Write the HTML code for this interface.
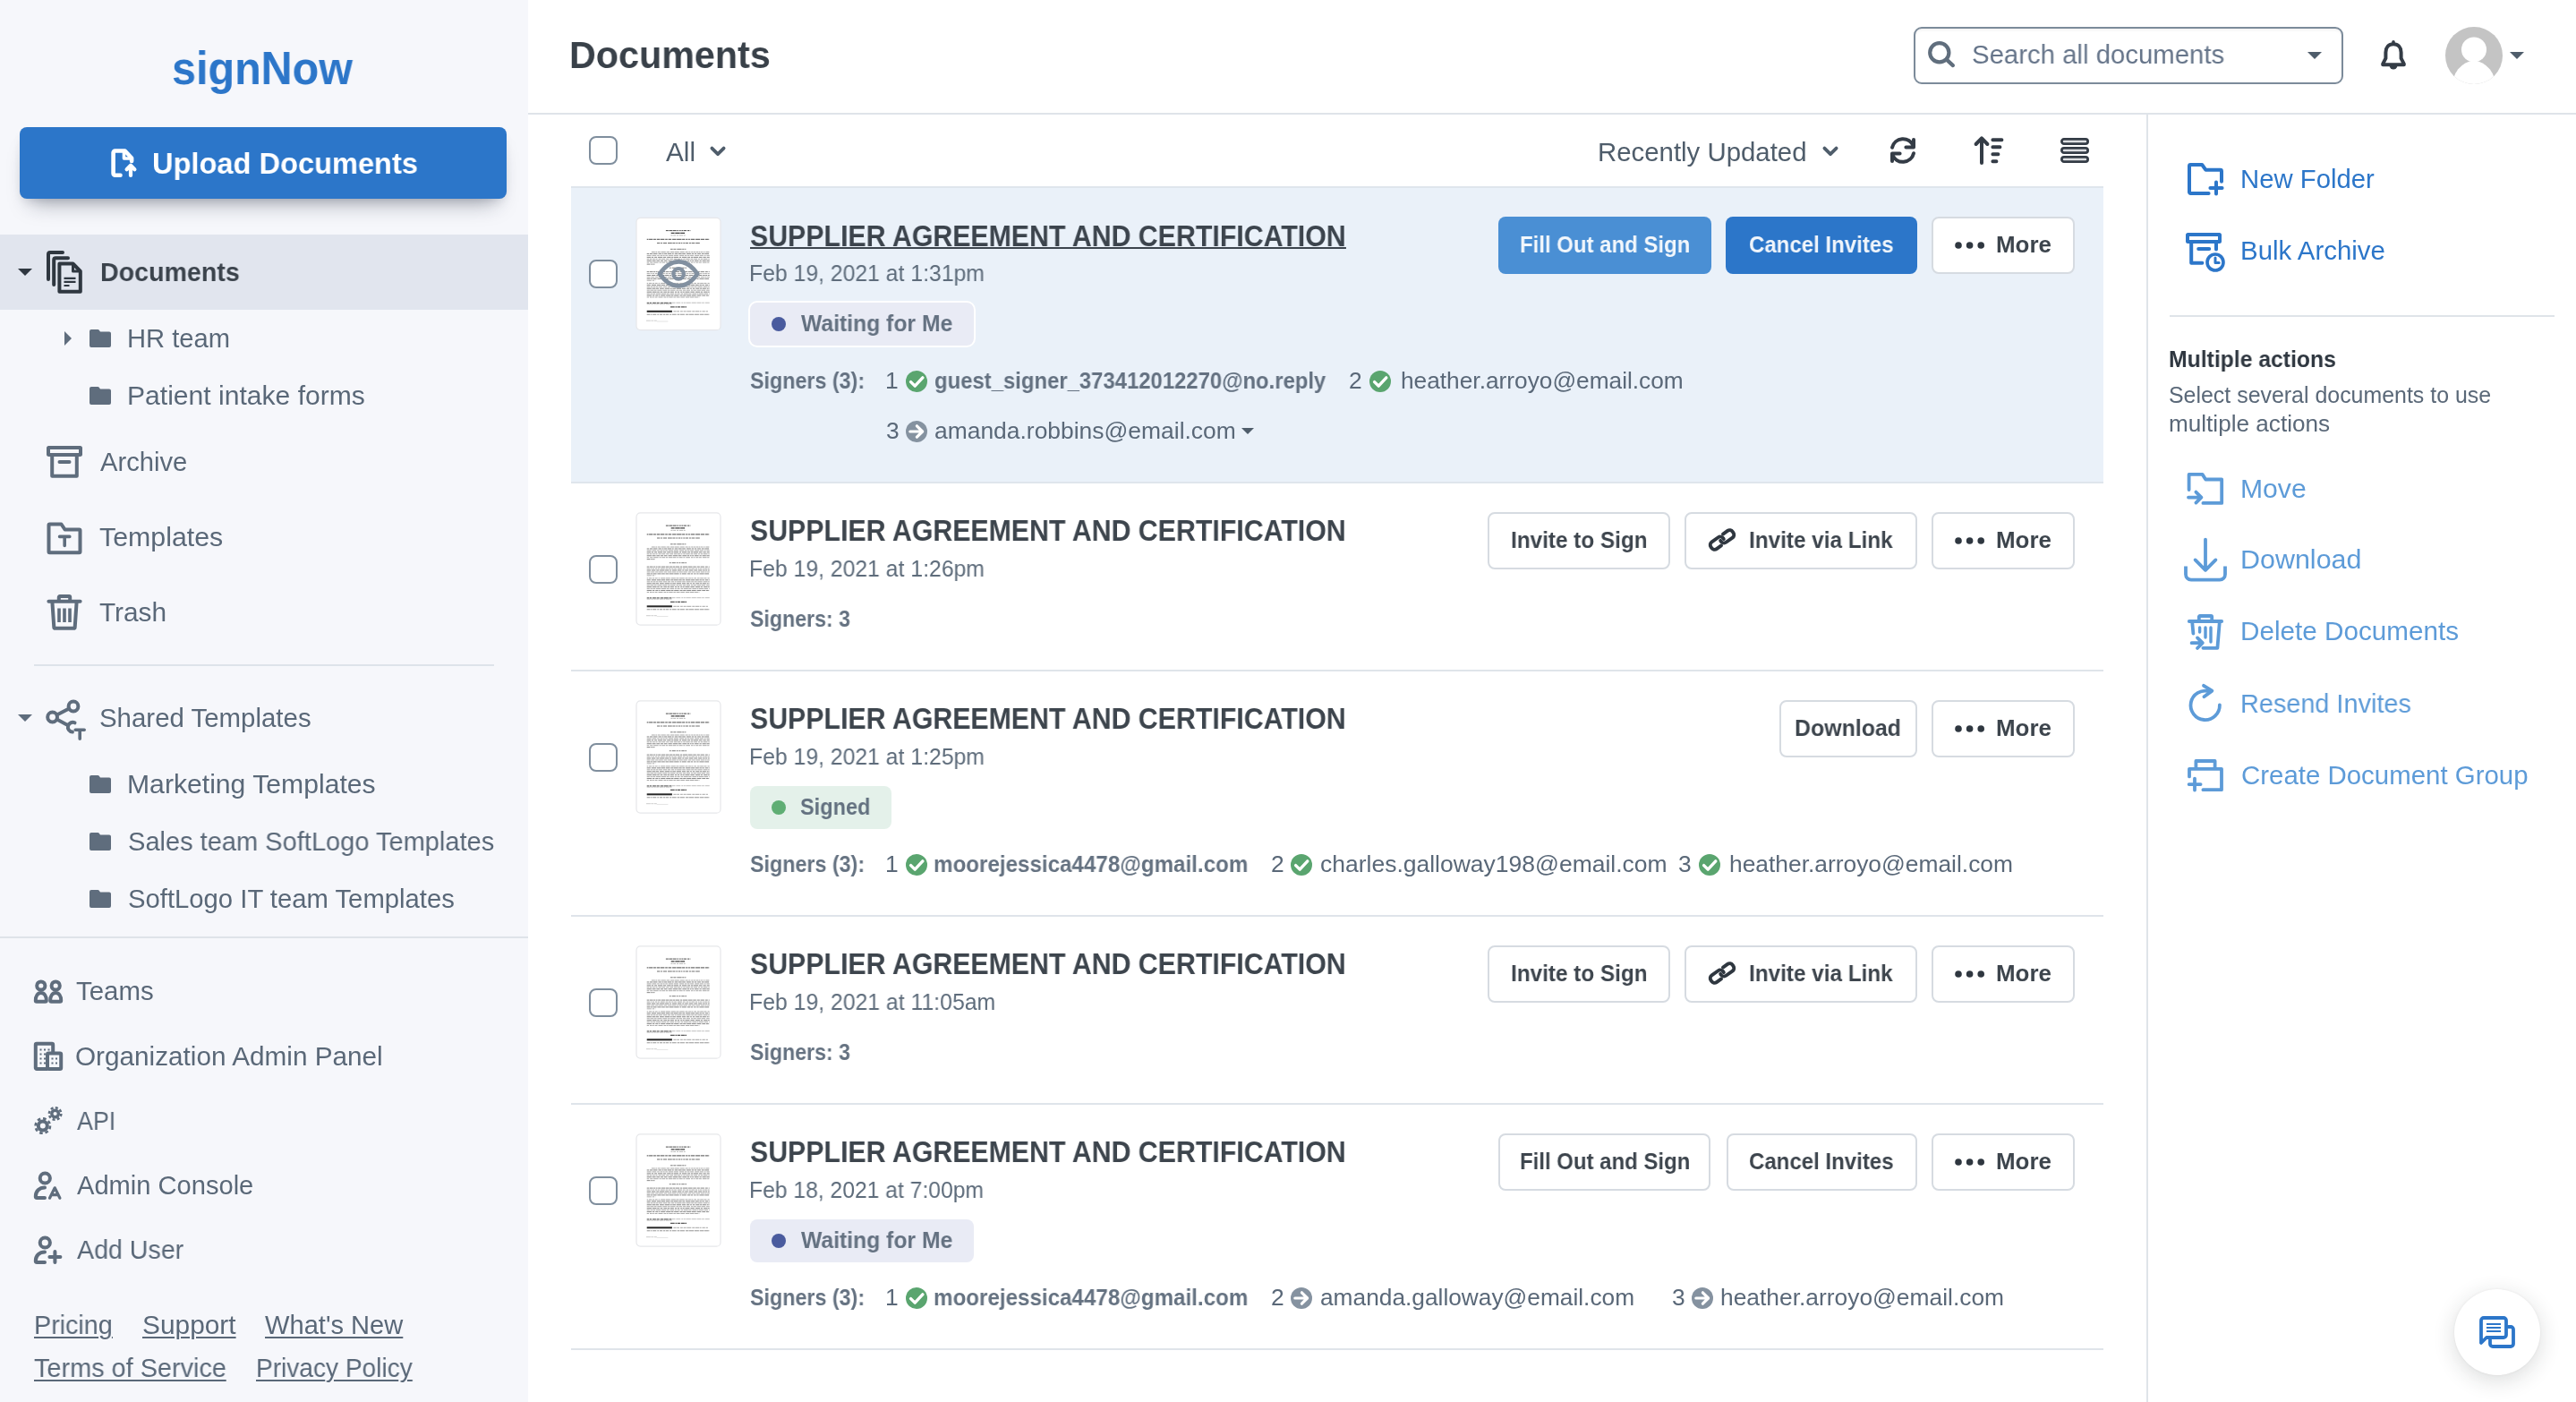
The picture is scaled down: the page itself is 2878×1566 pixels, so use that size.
<!DOCTYPE html>
<html lang="en"><head><meta charset="utf-8"><title>Documents - signNow</title>
<style>
html,body{margin:0;padding:0;}
body{width:2878px;height:1566px;overflow:hidden;background:#fff;position:relative;font-family:"Liberation Sans",sans-serif;}
.t{position:absolute;white-space:pre;transform-origin:0 0;will-change:transform;}
.abs{position:absolute;}
svg{position:absolute;overflow:visible;}
.sidebar{position:absolute;left:0;top:0;width:590px;height:1566px;background:#f6f7fb;}
.cb{position:absolute;width:28px;height:28px;border:2px solid #7f8e9d;border-radius:8px;background:#fff;}
.btn{position:absolute;height:60px;border:2px solid #d6dbe1;border-radius:8px;background:#fff;}
.btnp{position:absolute;height:64px;border-radius:8px;}
.hr{position:absolute;height:2px;background:#dfe4ea;}
.thumb{position:absolute;width:92px;height:124px;border:1.5px solid #e7e8ea;border-radius:5px;background:#fff;}
.u{text-decoration:underline;text-decoration-thickness:2px;text-underline-offset:4px;}

</style></head>
<body>
<nav>
<div class="sidebar"></div>
<span class="t " style="left:191.6px;top:51px;font-size:51.5px;line-height:51.5px;color:#2c76c9;transform:scaleX(0.9413);font-weight:700;">signNow</span>
<div class="abs" style="left:22px;top:142px;width:544px;height:80px;border-radius:8px;background:#2c76c9;box-shadow:0 16px 24px -12px rgba(25,35,55,.40),0 5px 12px -5px rgba(25,35,55,.18);"></div>
<svg style="left:120px;top:162px" width="40" height="40" viewBox="0 0 40 40" fill="none" stroke="#fff" stroke-width="4.6" stroke-linecap="round" stroke-linejoin="round"><path d="M14.5 33.7H8.6a2 2 0 0 1-2-2V8.5a2 2 0 0 1 2-2h11l7.5 8v3.5"/><path d="M18.5 7v8h8" stroke-width="3.6"/><path d="M26 34V23.600M21.600 27.200l4.400-4.400 4.400 4.400" stroke-width="4.200"/></svg>
<span class="t " style="left:169.5px;top:166px;font-size:33.2px;line-height:33.2px;color:#fff;transform:scaleX(0.9816);font-weight:700;">Upload Documents</span>
<div class="abs" style="left:0;top:262px;width:590px;height:84px;background:#e1e5ee"></div>
<svg style="left:20px;top:300px" width="16" height="8" viewBox="0 0 16 8"><path d="M0 0h16l-8 8z" fill="#2f3740"/></svg>
<svg style="left:50px;top:278px" width="44" height="52" viewBox="0 0 44 52" fill="none" stroke="#2f3740" stroke-width="4" stroke-linecap="round" stroke-linejoin="round"><path d="M20 4H6a2 2 0 0 0-2 2v28"/><path d="M26 10.3H12.2a2 2 0 0 0-2 2V40"/><path d="M16.400 16.500h15.100l8.300 8.500v22.700h-23.400z"/><path d="M31.5 17v8h8" stroke-width="3"/><path d="M21.500 32.800h13M21.500 36.900h13M21.500 41h6" stroke-width="2.200" stroke-linecap="butt"/></svg>
<span class="t " style="left:111.6px;top:290px;font-size:29.1px;line-height:29.1px;color:#2f3740;transform:scaleX(0.9832);font-weight:700;opacity:.93;">Documents</span>
<svg style="left:72px;top:370px" width="8" height="16" viewBox="0 0 8 16"><path d="M0 0l8 8-8 8z" fill="#5f6d7d"/></svg>
<svg style="left:100px;top:368px" width="24" height="20" viewBox="0 0 24 20"><path d="M2 0h7.2c.7 0 1.2.3 1.6.8L12 2.4h10a2 2 0 0 1 2 2V18a2 2 0 0 1-2 2H2a2 2 0 0 1-2-2V2a2 2 0 0 1 2-2z" fill="#5f6d7d"/></svg>
<span class="t " style="left:142.4px;top:364px;font-size:29.1px;line-height:29.1px;color:#5a6878;transform:scaleX(1.0018);">HR team</span>
<svg style="left:100px;top:432px" width="24" height="20" viewBox="0 0 24 20"><path d="M2 0h7.2c.7 0 1.2.3 1.6.8L12 2.4h10a2 2 0 0 1 2 2V18a2 2 0 0 1-2 2H2a2 2 0 0 1-2-2V2a2 2 0 0 1 2-2z" fill="#5f6d7d"/></svg>
<span class="t " style="left:142.3px;top:428px;font-size:29.1px;line-height:29.1px;color:#5a6878;transform:scaleX(1.0340);">Patient intake forms</span>
<svg style="left:50px;top:496px" width="44" height="40" viewBox="0 0 44 40" fill="none" stroke="#5f6d7d" stroke-width="4" stroke-linejoin="round"><rect x="4" y="4" width="36" height="8" rx="0.5"/><path d="M8.2 12v23.8h27.6V12"/><path d="M16.5 20h11" stroke-linecap="round"/></svg>
<span class="t " style="left:112.3px;top:502px;font-size:29.1px;line-height:29.1px;color:#5a6878;transform:scaleX(1.0032);">Archive</span>
<svg style="left:50px;top:581px" width="44" height="40" viewBox="0 0 44 40" fill="none" stroke="#5f6d7d" stroke-width="4" stroke-linejoin="round" stroke-linecap="round"><path d="M4.5 35.3V5.5a1 1 0 0 1 1-1h13l4 6h16a1 1 0 0 1 1 1v23.8a1 1 0 0 1-1 1h-33a1 1 0 0 1-1-1z"/><path d="M16.6 18.4h11.2M22.2 18.8v9.6" stroke-width="3.6"/></svg>
<span class="t " style="left:111.3px;top:586px;font-size:29.1px;line-height:29.1px;color:#5a6878;transform:scaleX(1.0423);">Templates</span>
<svg style="left:50px;top:662px" width="44" height="44" viewBox="0 0 44 44" fill="none" stroke="#5f6d7d" stroke-width="4" stroke-linejoin="round" stroke-linecap="round"><path d="M4.4 9.8h35.2"/><path d="M15.8 9V5a1 1 0 0 1 1-1h10.4a1 1 0 0 1 1 1v4"/><path d="M8.4 10.5l1.9 28a1.4 1.4 0 0 0 1.4 1.3h20.6a1.4 1.4 0 0 0 1.4-1.3l1.9-28"/><path d="M16 17.5v15.5M22 17.5v15.5M28 17.5v15.5" stroke-width="3.6" stroke-linecap="butt"/></svg>
<span class="t " style="left:111.3px;top:670px;font-size:29.1px;line-height:29.1px;color:#5a6878;transform:scaleX(1.0243);">Trash</span>
<div class="hr" style="left:38px;top:742px;width:514px;background:#dde3ea"></div>
<svg style="left:20px;top:798px" width="16" height="8" viewBox="0 0 16 8"><path d="M0 0h16l-8 8z" fill="#5f6d7d"/></svg>
<svg style="left:50px;top:780px" width="48" height="48" viewBox="0 0 48 48" fill="none" stroke="#5f6d7d" stroke-width="4" stroke-linecap="round"><circle cx="32" cy="9" r="5.4"/><circle cx="8.6" cy="21" r="5.4"/><path d="M13.6 18.5l13.5-7M13.6 23.6l12 6.3"/><path d="M33.5 27.3a5.4 5.4 0 1 0-2.6 10.3"/><path d="M34.2 35.2h10M39.2 35.8v9.5" stroke-width="3.6"/></svg>
<span class="t " style="left:111.0px;top:788px;font-size:29.1px;line-height:29.1px;color:#5a6878;transform:scaleX(1.0113);">Shared Templates</span>
<svg style="left:100px;top:866px" width="24" height="20" viewBox="0 0 24 20"><path d="M2 0h7.2c.7 0 1.2.3 1.6.8L12 2.4h10a2 2 0 0 1 2 2V18a2 2 0 0 1-2 2H2a2 2 0 0 1-2-2V2a2 2 0 0 1 2-2z" fill="#5f6d7d"/></svg>
<span class="t " style="left:141.9px;top:862px;font-size:29.1px;line-height:29.1px;color:#5a6878;transform:scaleX(1.0364);">Marketing Templates</span>
<svg style="left:100px;top:930px" width="24" height="20" viewBox="0 0 24 20"><path d="M2 0h7.2c.7 0 1.2.3 1.6.8L12 2.4h10a2 2 0 0 1 2 2V18a2 2 0 0 1-2 2H2a2 2 0 0 1-2-2V2a2 2 0 0 1 2-2z" fill="#5f6d7d"/></svg>
<span class="t " style="left:143.0px;top:926px;font-size:29.1px;line-height:29.1px;color:#5a6878;transform:scaleX(0.9975);">Sales team SoftLogo Templates</span>
<svg style="left:100px;top:994px" width="24" height="20" viewBox="0 0 24 20"><path d="M2 0h7.2c.7 0 1.2.3 1.6.8L12 2.4h10a2 2 0 0 1 2 2V18a2 2 0 0 1-2 2H2a2 2 0 0 1-2-2V2a2 2 0 0 1 2-2z" fill="#5f6d7d"/></svg>
<span class="t " style="left:143.0px;top:990px;font-size:29.1px;line-height:29.1px;color:#5a6878;transform:scaleX(1.0056);">SoftLogo IT team Templates</span>
<div class="hr" style="left:0;top:1046px;width:590px;background:#dfe3e9"></div>
<svg style="left:38px;top:1094px" width="32" height="28" viewBox="0 0 32 28" fill="none" stroke="#5f6d7d" stroke-width="4" stroke-linejoin="round"><circle cx="7.8" cy="7" r="4.6"/><circle cx="24.2" cy="7" r="4.6"/><path d="M1.8 23.5c0-5 2.4-8.6 6-8.6s6 3.600 6 8.600a1.200 1.200 0 0 1-1.200 1.200H3a1.200 1.200 0 0 1-1.200-1.200z"/><path d="M18.200 23.500c0-5 2.400-8.600 6-8.600s6 3.600 6 8.600a1.200 1.200 0 0 1-1.200 1.200H19.400a1.200 1.200 0 0 1-1.200-1.200z"/></svg>
<span class="t " style="left:85.4px;top:1093px;font-size:29.1px;line-height:29.1px;color:#5a6878;transform:scaleX(1.0119);">Teams</span>
<svg style="left:38px;top:1164px" width="32" height="32" viewBox="0 0 32 32" fill="none" stroke="#5f6d7d" stroke-width="4" stroke-linejoin="round"><path d="M15 30H3a1.200 1.200 0 0 1-1.200-1.200V3a1.200 1.200 0 0 1 1.200-1.200h17a1.200 1.200 0 0 1 1.200 1.200v9"/><rect x="15" y="12.500" width="15.200" height="17.500" rx="1.200"/><path d="M6.500 8.500h2M11 8.500h2M15.500 8.500h2M6.500 13.500h2M11 13.500h2M6.500 18.500h2M11 18.500h2M6.500 23.500h2M11 23.500h2M19.500 18.500h2M24 18.500h2M19.500 23.500h2M24 23.500h2" stroke-width="2.200"/></svg>
<span class="t " style="left:84.4px;top:1166px;font-size:29.1px;line-height:29.1px;color:#5a6878;transform:scaleX(1.0217);">Organization Admin Panel</span>
<svg style="left:38px;top:1235px" width="32" height="34" viewBox="0 0 32 34" fill="none" stroke="#5f6d7d"><circle cx="9.8" cy="22.6" r="5" stroke-width="4"/><circle cx="9.8" cy="22.6" r="8.2" stroke-width="2.6" stroke-dasharray="3.6 2.840259499999999"/><circle cx="23.6" cy="9" r="3.8" stroke-width="3.4"/><circle cx="23.6" cy="9" r="6.7" stroke-width="2.6" stroke-dasharray="3 2.2621632499999995"/></svg>
<span class="t " style="left:86.4px;top:1238px;font-size:29.1px;line-height:29.1px;color:#5a6878;transform:scaleX(0.9227);">API</span>
<svg style="left:38px;top:1308px" width="32" height="32" viewBox="0 0 32 32" fill="none" stroke="#5f6d7d" stroke-width="4" stroke-linecap="round" stroke-linejoin="round"><circle cx="12.300" cy="8" r="5.600"/><path d="M12 30H3.200a1.400 1.400 0 0 1-1.400-1.400c0-6 4-10.200 10.200-10.200"/><path d="M17.500 30.200l5.700-11.400 5.700 11.400M20 26.600h6.500" stroke-width="3.200"/></svg>
<span class="t " style="left:86.4px;top:1310px;font-size:29.1px;line-height:29.1px;color:#5a6878;transform:scaleX(1.0000);">Admin Console</span>
<svg style="left:38px;top:1380px" width="32" height="32" viewBox="0 0 32 32" fill="none" stroke="#5f6d7d" stroke-width="4" stroke-linecap="round" stroke-linejoin="round"><circle cx="12.300" cy="8" r="5.600"/><path d="M12 30H3.200a1.400 1.400 0 0 1-1.400-1.400c0-6 4-10.200 10.200-10.200"/><path d="M23.400 18v12M17.400 24h12"/></svg>
<span class="t " style="left:86.4px;top:1382px;font-size:29.1px;line-height:29.1px;color:#5a6878;transform:scaleX(0.9835);">Add User</span>
<span class="t " style="left:38.0px;top:1466px;font-size:29.1px;line-height:29.1px;color:#5a6878;transform:scaleX(0.9865);text-decoration:underline;text-decoration-thickness:1.600px;text-underline-offset:3px;">Pricing</span>
<span class="t " style="left:158.5px;top:1466px;font-size:29.1px;line-height:29.1px;color:#5a6878;transform:scaleX(1.0265);text-decoration:underline;text-decoration-thickness:1.600px;text-underline-offset:3px;">Support</span>
<span class="t " style="left:295.6px;top:1466px;font-size:29.1px;line-height:29.1px;color:#5a6878;transform:scaleX(0.9987);text-decoration:underline;text-decoration-thickness:1.600px;text-underline-offset:3px;">What&#39;s New</span>
<span class="t " style="left:38.0px;top:1514px;font-size:29.1px;line-height:29.1px;color:#5a6878;transform:scaleX(0.9917);text-decoration:underline;text-decoration-thickness:1.600px;text-underline-offset:3px;">Terms of Service</span>
<span class="t " style="left:286.0px;top:1514px;font-size:29.1px;line-height:29.1px;color:#5a6878;transform:scaleX(0.9652);text-decoration:underline;text-decoration-thickness:1.600px;text-underline-offset:3px;">Privacy Policy</span>
</nav>
<header>
<span class="t " style="left:635.7px;top:40px;font-size:42.6px;line-height:42.6px;color:#2b333c;transform:scaleX(0.9692);font-weight:700;opacity:.93;">Documents</span>
<div class="hr" style="left:590px;top:126px;width:2288px;background:#dfe4e9"></div>
<div class="abs" style="left:2398px;top:128px;width:2px;height:1438px;background:#dfe4e9"></div>
<div class="abs" style="left:2138px;top:30px;width:476px;height:60px;border:2px solid #7c8b9a;border-radius:9px;background:#fff;box-shadow:inset 0 2px 3px rgba(0,0,0,.05)"></div>
<svg style="left:2152px;top:44px" width="34" height="34" viewBox="0 0 34 34" fill="none" stroke="#606e7d" stroke-width="4.200" stroke-linecap="round"><circle cx="14.800" cy="14.700" r="10.600"/><path d="M22.600 22.400l7.300 6.700"/></svg>
<span class="t " style="left:2202.5px;top:46px;font-size:29.5px;line-height:29.5px;color:#66758a;transform:scaleX(0.9946);">Search all documents</span>
<svg style="left:2578px;top:58px" width="16" height="8" viewBox="0 0 16 8"><path d="M0 0h16l-8 8z" fill="#4f5d6b"/></svg>
<svg style="left:2658px;top:44px" width="32" height="36" viewBox="0 0 32 36" fill="none" stroke="#343c46" stroke-width="4" stroke-linejoin="round" stroke-linecap="round"><path d="M16 5.200c-5.400 0-8.600 4-8.600 9.200v6.800L4.200 27.400v.8h23.600v-.8l-3.200-6.200v-6.800c0-5.200-3.200-9.200-8.600-9.200z"/><path d="M16 2.800v2" stroke-width="3.600"/><path d="M11.600 29.200a4.400 4.400 0 0 0 8.800 0z" fill="#343c46" stroke="none"/></svg>
<svg style="left:2732px;top:30px" width="64" height="64" viewBox="0 0 64 64"><defs><clipPath id="avc"><circle cx="32" cy="32" r="32"/></clipPath></defs><circle cx="32" cy="32" r="32" fill="#c4c4c4"/><g clip-path="url(#avc)" fill="#fff"><circle cx="32" cy="25.400" r="14"/><ellipse cx="32" cy="70" rx="25" ry="32"/></g></svg>
<svg style="left:2804px;top:58px" width="16" height="8" viewBox="0 0 16 8"><path d="M0 0h16l-8 8z" fill="#4f5d6b"/></svg>
<div class="cb" style="left:658px;top:152px"></div>
<span class="t " style="left:744.0px;top:156px;font-size:29.1px;line-height:29.1px;color:#4f5d6b;transform:scaleX(1.0200);">All</span>
<svg style="left:793px;top:163px" width="18" height="12" viewBox="0 0 18 12" fill="none" stroke="#4f5d6b" stroke-width="3.800" stroke-linecap="round" stroke-linejoin="round"><path d="M2.400 2.600L9 9.200l6.600-6.600"/></svg>
<span class="t " style="left:1785.4px;top:156px;font-size:29.1px;line-height:29.1px;color:#4f5d6b;transform:scaleX(1.0097);">Recently Updated</span>
<svg style="left:2035.5px;top:163px" width="18" height="12" viewBox="0 0 18 12" fill="none" stroke="#4f5d6b" stroke-width="3.800" stroke-linecap="round" stroke-linejoin="round"><path d="M2.400 2.600L9 9.200l6.600-6.600"/></svg>
<svg style="left:2110px;top:152px" width="32" height="32" viewBox="0 0 32 32" fill="none" stroke="#343c46" stroke-width="4" stroke-linecap="round" stroke-linejoin="round"><path d="M4 12.800A12.400 12.400 0 0 1 27.600 11"/><path d="M28 4v8.600h-8.600"/><path d="M28 19.200A12.400 12.400 0 0 1 4.400 21"/><path d="M4 28v-8.600h8.600"/></svg>
<svg style="left:2204px;top:150px" width="36" height="36" viewBox="0 0 36 36" fill="none" stroke="#343c46" stroke-width="4" stroke-linecap="round" stroke-linejoin="round"><path d="M10 32V4.600M3.600 11L10 4.400l6.400 6.600"/><path d="M22.400 6.200h10M22.400 14.200h8M22.400 22.200h6M22.400 30.200h4"/></svg>
<svg style="left:2302px;top:154px" width="32" height="28" viewBox="0 0 32 28" fill="#dcdee1" stroke="#343c46" stroke-width="2.800"><rect x="1.400" y="1.400" width="29.200" height="5.200" rx="2.600"/><rect x="1.400" y="11.400" width="29.200" height="5.200" rx="2.600"/><rect x="1.400" y="21.400" width="29.200" height="5.200" rx="2.600"/></svg>
</header>
<main>
<div class="abs" style="left:638px;top:208px;width:1712px;height:332px;background:#eaf1f9;border-top:2px solid #dfe5ec;border-bottom:2px solid #dfe5ec;box-sizing:border-box"></div>
<div class="cb" style="left:658px;top:290px"></div>
<svg style="left:709px;top:241px" width="98" height="130" viewBox="0 0 98 130" fill="none"><g transform="translate(1.50 1.80)"><rect x="0.5" y="0.5" width="94" height="125.400" rx="4.500" fill="#fff" stroke="#e6e7ea" stroke-width="1.200"/><g transform="translate(0.9 0.7)"><path d="M32.5 14.10H60.0" stroke="#111" stroke-width="1.0" stroke-dasharray="2.9 0.6 4.1 0.5 3.7 0.7 1.8 0.8 1.7 0.7 1.9 0.5 3.3 0.9 2.1 0.6 4.0 1.0" opacity="0.75"/><path d="M38.3 16.80H54.3" stroke="#111" stroke-width="1.2" stroke-dasharray="3.9 0.7 5.4 0.5 4.9 0.6" opacity="0.80"/><path d="M38.0 19.40H54.3" stroke="#111" stroke-width="1.0" stroke-dasharray="2.2 0.6 2.8 0.9 2.3 0.8 4.1 0.7 3.7 0.5" opacity="0.30"/><path d="M11.3 23.85H81.3" stroke="#111" stroke-width="1.1" stroke-dasharray="1.8 0.6 4.3 0.7 2.8 0.8 3.4 0.6 4.7 0.8 2.6 0.8 3.6 0.9 4.4 0.6 5.4 0.6 3.2 0.9 2.2 0.7 1.8 0.8 4.6 0.8 5.0 0.7 4.3 0.8 3.9 0.7 4.9 1.0" opacity="0.60"/><path d="M22.6 28.05H70.4" stroke="#111" stroke-width="1.1" stroke-dasharray="3.4 0.8 1.8 0.9 4.1 1.0 4.8 0.6 3.1 0.8 1.7 0.7 2.3 0.6 1.8 0.9 2.1 0.6 3.1 0.9 1.9 0.7 3.7 0.9 4.8 0.9" opacity="0.60"/><path d="M37.6 34.80H55.0" stroke="#111" stroke-width="1.0" stroke-dasharray="2.7 0.7 3.0 0.9 5.3 0.6 2.3 0.6 2.5 0.7" opacity="0.55"/><path d="M16.5 38.00H81.3" stroke="#111" stroke-width="1.0" stroke-dasharray="3.9 0.6 1.6 0.7 3.0 0.8 5.3 0.8 3.6 0.8 4.2 0.5 5.1 0.9 5.0 0.9 3.1 0.7 2.0 0.8 1.8 0.5 2.4 0.6 2.9 0.5 1.6 0.6 2.0 0.7 1.7 0.9 4.0 0.6" opacity="0.36"/><path d="M11.3 39.95H81.3" stroke="#111" stroke-width="1.0" stroke-dasharray="2.6 0.7 3.0 0.6 4.9 1.0 3.4 0.7 1.9 0.6 2.9 0.6 4.8 0.6 1.7 1.0 3.7 0.6 3.7 0.5 3.7 1.0 5.0 0.8 2.6 0.7 2.3 0.9 3.7 0.9 2.9 0.6 4.8 1.0" opacity="0.50"/><path d="M11.3 41.90H81.3" stroke="#111" stroke-width="1.0" stroke-dasharray="4.9 0.9 4.8 0.9 2.5 0.8 3.0 0.5 1.7 0.6 2.6 0.8 5.3 0.7 5.3 1.0 5.3 0.7 2.5 0.6 2.4 0.6 4.0 1.0 4.9 0.7 4.1 0.9 1.9 0.8 5.1 0.9" opacity="0.36"/><path d="M11.3 43.85H81.3" stroke="#111" stroke-width="1.0" stroke-dasharray="4.5 0.7 2.3 0.9 2.9 0.9 5.4 0.7 3.2 1.0 4.4 0.6 2.1 0.6 5.1 0.9 2.2 0.9 5.4 0.8 3.0 0.8 2.1 0.5 5.4 0.8 3.7 1.0 3.3 0.9 4.8 0.6" opacity="0.50"/><path d="M11.3 45.80H81.3" stroke="#111" stroke-width="1.0" stroke-dasharray="2.6 0.6 2.5 0.8 2.6 0.7 2.1 1.0 3.0 0.7 3.9 1.0 3.2 1.0 3.6 0.8 3.6 0.5 3.3 0.6 1.6 0.9 2.3 0.7 4.4 0.8 2.9 0.8 3.8 0.9 2.0 0.8 2.6 0.6 4.6 0.8 3.8 0.9" opacity="0.36"/><path d="M11.3 47.75H81.3" stroke="#111" stroke-width="1.0" stroke-dasharray="5.2 0.7 4.0 0.8 3.6 0.8 3.4 0.8 3.5 1.0 4.3 0.9 5.3 0.6 3.8 1.0 4.9 0.6 2.1 0.7 1.9 0.6 1.9 0.8 4.7 0.9 2.2 0.9 4.2 0.6 5.0 1.0" opacity="0.50"/><path d="M11.3 49.70H81.3" stroke="#111" stroke-width="1.0" stroke-dasharray="2.5 1.0 3.2 0.7 5.5 0.9 2.2 0.7 3.6 0.7 2.4 0.7 4.4 0.5 3.8 0.7 1.7 0.7 4.0 0.8 1.9 1.0 4.7 1.0 2.0 0.6 1.8 0.9 2.7 0.6 3.2 1.0 4.8 0.6 2.2 1.0" opacity="0.36"/><path d="M11.3 51.65H20.0" stroke="#111" stroke-width="1.0" stroke-dasharray="3.8 0.9 1.9 0.5 4.3 0.7" opacity="0.50"/><path d="M36.4 55.70H55.6" stroke="#111" stroke-width="1.0" stroke-dasharray="1.9 1.0 4.1 0.9 1.9 0.9 1.9 0.9 3.4 0.7 3.8 1.0" opacity="0.55"/><path d="M11.3 60.10H81.3" stroke="#111" stroke-width="1.0" stroke-dasharray="2.6 0.6 3.7 0.6 2.0 0.6 1.8 0.6 2.8 0.7 4.6 0.6 3.6 0.6 3.0 0.5 2.6 0.5 4.5 0.8 2.3 0.7 5.2 0.6 4.8 0.7 3.5 0.9 3.1 0.8 4.3 1.0 2.9 0.9 4.4 0.8" opacity="0.50"/><path d="M11.3 62.05H81.3" stroke="#111" stroke-width="1.0" stroke-dasharray="3.2 0.7 1.8 0.6 1.9 0.9 2.6 0.6 1.9 0.9 5.0 0.8 2.7 0.6 2.7 0.7 2.2 0.7 2.6 1.0 5.4 0.8 2.6 1.0 2.8 0.7 1.6 0.7 3.5 0.8 2.4 0.8 1.6 0.6 2.0 0.7 1.8 0.5 2.8 0.6 3.9 0.8" opacity="0.34"/><path d="M11.3 64.00H81.3" stroke="#111" stroke-width="1.0" stroke-dasharray="4.5 0.8 4.4 0.9 3.1 0.7 5.4 0.6 4.4 0.8 1.8 0.9 5.1 0.8 4.5 0.9 2.1 0.8 3.6 0.9 4.7 0.9 3.9 0.9 4.3 0.8 2.5 0.5 2.1 0.7 2.0 0.9" opacity="0.50"/><path d="M11.3 65.95H81.3" stroke="#111" stroke-width="1.0" stroke-dasharray="3.8 0.8 4.0 0.8 3.5 0.5 4.7 0.9 3.6 0.8 4.2 0.5 4.5 0.6 1.9 0.6 4.4 0.6 4.5 1.0 3.5 0.7 3.5 0.8 4.6 0.8 4.1 0.5 2.2 0.6 4.5 0.7" opacity="0.34"/><path d="M11.3 67.90H81.3" stroke="#111" stroke-width="1.0" stroke-dasharray="3.8 0.5 1.8 0.6 4.2 0.8 4.2 0.6 3.6 0.7 3.4 0.6 5.1 0.6 5.4 1.0 1.7 0.7 4.8 1.0 3.4 0.6 2.4 1.0 2.4 0.8 2.2 0.8 5.3 0.6 4.8 0.8" opacity="0.50"/><path d="M11.3 69.85H21.0" stroke="#111" stroke-width="1.0" stroke-dasharray="5.1 0.9 2.5 0.9 3.5 0.5" opacity="0.34"/><path d="M11.3 72.90H81.3" stroke="#111" stroke-width="1.0" stroke-dasharray="1.6 0.7 3.4 0.7 2.1 0.7 2.8 0.9 1.6 0.9 4.9 0.6 5.2 0.9 5.1 0.6 3.1 0.7 5.5 0.8 3.0 0.7 2.7 0.5 2.0 0.9 2.7 1.0 2.6 0.6 3.6 0.6 3.1 1.0 5.0 0.9" opacity="0.36"/><path d="M11.3 74.85H81.3" stroke="#111" stroke-width="1.0" stroke-dasharray="4.1 1.0 5.3 0.8 4.4 0.5 4.5 0.7 4.5 0.8 2.7 0.5 5.2 0.6 3.4 0.7 2.8 0.9 5.4 0.6 4.2 0.7 3.8 0.7 2.3 0.6 2.4 1.0 3.5 0.6 5.1 1.0" opacity="0.50"/><path d="M11.3 76.80H81.3" stroke="#111" stroke-width="1.0" stroke-dasharray="3.4 0.6 2.4 0.5 2.9 0.5 2.5 0.6 3.8 0.9 4.5 0.7 3.2 0.8 3.1 0.7 1.8 0.6 5.4 0.6 3.6 0.8 5.0 0.6 2.7 0.6 3.2 0.7 5.3 0.9 5.0 0.5 1.7 0.9" opacity="0.36"/><path d="M11.3 78.75H81.3" stroke="#111" stroke-width="1.0" stroke-dasharray="5.1 0.7 3.9 0.5 3.1 1.0 4.8 0.9 5.4 0.6 2.0 0.6 3.6 0.8 5.3 0.9 4.1 0.9 3.4 0.8 1.8 0.9 2.5 1.0 4.1 0.7 2.1 0.6 4.1 0.8 2.0 0.5 3.6 0.8" opacity="0.50"/><path d="M11.3 80.70H81.3" stroke="#111" stroke-width="1.0" stroke-dasharray="3.1 0.6 3.9 0.5 2.8 0.7 5.3 0.8 5.0 0.7 2.5 0.6 5.3 0.9 2.8 0.5 3.5 0.8 3.2 0.6 4.2 1.0 2.5 0.5 2.9 0.7 4.3 0.6 4.7 0.9 3.6 0.6" opacity="0.36"/><path d="M11.3 82.65H81.3" stroke="#111" stroke-width="1.0" stroke-dasharray="5.4 0.7 4.8 0.6 2.5 0.9 2.8 1.0 3.5 0.6 2.5 0.7 4.2 1.0 2.2 0.7 2.4 1.0 2.2 0.5 1.8 0.7 5.1 0.9 4.5 1.0 5.2 0.7 2.3 1.0 4.5 0.5 4.2 0.7" opacity="0.50"/><path d="M11.3 84.60H81.3" stroke="#111" stroke-width="1.0" stroke-dasharray="3.1 0.7 2.3 0.5 2.7 0.7 5.3 0.6 5.4 0.6 3.0 0.9 4.8 0.7 1.8 0.7 3.1 1.0 2.4 0.7 5.1 0.5 3.2 0.9 4.6 0.5 1.7 0.5 5.2 0.6 4.5 0.9 2.9 0.6" opacity="0.36"/><path d="M11.3 86.55H81.3" stroke="#111" stroke-width="1.0" stroke-dasharray="5.3 0.8 2.6 0.9 2.8 0.6 1.6 0.9 5.2 0.8 5.3 0.5 2.5 0.7 5.3 1.0 3.1 0.6 3.3 0.7 5.2 0.6 4.7 0.9 4.8 0.9 4.0 0.7 2.8 0.7 4.7 0.5" opacity="0.50"/><path d="M11.3 88.50H70.0" stroke="#111" stroke-width="1.0" stroke-dasharray="2.4 0.9 2.6 0.5 1.7 0.8 2.9 1.0 5.0 1.0 2.6 0.5 2.0 0.7 4.4 0.7 2.5 0.7 4.0 0.8 4.5 0.9 4.2 0.6 4.9 0.6 3.8 0.7 4.5 0.6" opacity="0.36"/><path d="M11.3 94.80H39.0" stroke="#111" stroke-width="1.2" stroke-dasharray="2.6 0.6 2.2 0.9 3.9 0.7 3.1 1.0 3.6 0.6 4.8 0.8 5.5 0.6" opacity="0.60"/><path d="M39.6 94.70H81.3" stroke="#111" stroke-width="1.0" stroke-dasharray="3.5 0.9 4.9 1.0 1.8 0.6 2.1 0.6 5.4 0.8 5.2 0.7 5.0 0.7 2.6 0.9 5.3 0.6" opacity="0.28"/><path d="M11.3 96.20H39.0" stroke="#111" stroke-width="0.8" stroke-dasharray="3.9 0.8 2.4 0.7 2.2 0.6 2.6 0.8 4.1 0.6 1.6 0.7 4.2 0.6 2.8 0.6" opacity="0.30"/><path d="M37.6 99.35H55.6" stroke="#111" stroke-width="1.1" stroke-dasharray="4.7 0.8 1.8 0.6 3.1 0.8 4.1 0.5 2.2 0.8" opacity="0.70"/><rect x="11.3" y="103.3" width="28.2" height="2.0" fill="#111" opacity="0.90"/><path d="M41.0 104.30H79.5" stroke="#111" stroke-width="1.0" stroke-dasharray="3.2 0.6 2.8 1.0 2.8 0.8 3.0 0.7 5.0 1.0 3.0 0.6 4.4 0.6 1.6 1.0 3.3 0.9 3.2 0.9" opacity="0.38"/><path d="M11.3 107.75H81.3" stroke="#111" stroke-width="1.1" stroke-dasharray="3.4 0.6 1.7 0.8 4.1 1.0 1.9 0.8 3.0 0.8 2.2 0.6 3.6 1.0 2.0 0.7 4.7 1.0 2.4 0.6 5.3 1.0 3.5 0.5 5.2 0.7 5.1 0.8 4.8 0.6 4.7 0.6 3.2 0.9" opacity="0.45"/><path d="M10.6 114.70H22.4" stroke="#111" stroke-width="0.8" stroke-dasharray="4.8 0.6 2.5 0.7 3.6 0.7" opacity="0.28"/><rect x="22.4" y="115.2" width="12.6" height="0.6" fill="#111" opacity="0.18"/></g><g fill="none" stroke="#8290a0" stroke-width="4.800" stroke-linejoin="round"><path d="M26.500 63.100C32.500 54.500 39.500 49.600 47.600 49.600S62.700 54.500 68.700 63.100C62.700 71.700 55.700 76.600 47.600 76.600S32.500 71.700 26.500 63.100z"/><circle cx="47.600" cy="63.100" r="5.700" stroke-width="4.300"/></g></g></svg>
<span class="t " style="left:837.6px;top:247px;font-size:33.2px;line-height:33.2px;color:#2f3740;transform:scaleX(0.9131);font-weight:700;opacity:.93;text-decoration:underline;text-decoration-thickness:2px;text-underline-offset:1px;">SUPPLIER AGREEMENT AND CERTIFICATION</span>
<span class="t " style="left:836.8px;top:293px;font-size:24.9px;line-height:24.9px;color:#5e6c7b;transform:scaleX(0.9946);">Feb 19, 2021 at 1:31pm</span>
<div class="abs" style="left:836px;top:336px;width:250px;height:48px;border:2px solid #fff;border-radius:10px;background:#e9ebf5"></div>
<div class="abs" style="left:862px;top:354px;width:16px;height:16px;border-radius:50%;background:#4a5b9e"></div>
<span class="t " style="left:894.6px;top:349px;font-size:24.9px;line-height:24.9px;color:#5a6878;transform:scaleX(0.9924);font-weight:700;opacity:.93;">Waiting for Me</span>
<div class="btnp" style="left:1674px;top:242px;width:238px;background:#4a8fd4"></div>
<span class="t " style="left:1697.5px;top:261px;font-size:25.9px;line-height:25.9px;color:#fff;transform:scaleX(0.9257);font-weight:700;opacity:.93;">Fill Out and Sign</span>
<div class="btnp" style="left:1928px;top:242px;width:214px;background:#2c76c9"></div>
<span class="t " style="left:1954.1px;top:261px;font-size:25.9px;line-height:25.9px;color:#fff;transform:scaleX(0.9279);font-weight:700;opacity:.93;">Cancel Invites</span>
<div class="btn" style="left:2158.2px;top:242px;width:155.4000000000001px"></div>
<span class="t " style="left:2230.4px;top:261px;font-size:25.9px;line-height:25.9px;color:#2f3740;transform:scaleX(1.0017);font-weight:700;opacity:.93;">More</span>
<svg style="left:2183.8px;top:270px" width="34" height="8" viewBox="0 0 34 8" fill="#2f3740"><circle cx="4" cy="4" r="3.800"/><circle cx="16.600" cy="4" r="3.800"/><circle cx="29.200" cy="4" r="3.800"/></svg>
<span class="t " style="left:837.7px;top:413px;font-size:24.9px;line-height:24.9px;color:#5a6878;transform:scaleX(0.9353);font-weight:700;opacity:.93;">Signers (3):</span>
<span class="t " style="left:989.4px;top:413px;font-size:24.9px;line-height:24.9px;color:#5a6878;transform:scaleX(1.0600);">1</span>
<svg style="left:1012px;top:414.0px" width="24" height="24" viewBox="0 0 24 24"><circle cx="12" cy="12" r="12" fill="#5aa56f"/><path d="M5.600 12.600l4.600 4.500 8.600-9.200" fill="none" stroke="#fff" stroke-width="3.400" stroke-linecap="round" stroke-linejoin="round"/></svg>
<span class="t " style="left:1043.6px;top:413px;font-size:24.9px;line-height:24.9px;color:#5a6878;transform:scaleX(0.9590);font-weight:700;opacity:.93;">guest_signer_373412012270@no.reply</span>
<span class="t " style="left:1506.9px;top:413px;font-size:24.9px;line-height:24.9px;color:#5a6878;transform:scaleX(1.0600);">2</span>
<svg style="left:1530px;top:414.0px" width="24" height="24" viewBox="0 0 24 24"><circle cx="12" cy="12" r="12" fill="#5aa56f"/><path d="M5.600 12.600l4.600 4.500 8.600-9.200" fill="none" stroke="#fff" stroke-width="3.400" stroke-linecap="round" stroke-linejoin="round"/></svg>
<span class="t " style="left:1564.6px;top:413px;font-size:24.9px;line-height:24.9px;color:#5a6878;transform:scaleX(1.0553);">heather.arroyo@email.com</span>
<span class="t " style="left:989.5px;top:469px;font-size:24.9px;line-height:24.9px;color:#5a6878;transform:scaleX(1.0600);">3</span>
<svg style="left:1012px;top:470.0px" width="24" height="24" viewBox="0 0 24 24"><circle cx="12" cy="12" r="12" fill="#8592a0"/><path d="M4.800 12h13M12.400 5.800l6.200 6.200-6.200 6.200" fill="none" stroke="#fff" stroke-width="3.200" stroke-linecap="round" stroke-linejoin="round"/></svg>
<span class="t " style="left:1043.5px;top:469px;font-size:24.9px;line-height:24.9px;color:#5a6878;transform:scaleX(1.0618);">amanda.robbins@email.com</span>
<svg style="left:1387px;top:478.0px" width="14" height="7" viewBox="0 0 14 7"><path d="M0 0h14l-7 7z" fill="#4f5d6b"/></svg>
<div class="cb" style="left:658px;top:620px"></div>
<svg style="left:709px;top:571px" width="98" height="130" viewBox="0 0 98 130" fill="none"><g transform="translate(1.50 1.30)"><rect x="0.5" y="0.5" width="94" height="125.400" rx="4.500" fill="#fff" stroke="#e6e7ea" stroke-width="1.200"/><g transform="translate(0.9 0.7)"><path d="M32.5 14.10H60.0" stroke="#111" stroke-width="1.0" stroke-dasharray="2.9 0.6 4.1 0.5 3.7 0.7 1.8 0.8 1.7 0.7 1.9 0.5 3.3 0.9 2.1 0.6 4.0 1.0" opacity="0.75"/><path d="M38.3 16.80H54.3" stroke="#111" stroke-width="1.2" stroke-dasharray="3.9 0.7 5.4 0.5 4.9 0.6" opacity="0.80"/><path d="M38.0 19.40H54.3" stroke="#111" stroke-width="1.0" stroke-dasharray="2.2 0.6 2.8 0.9 2.3 0.8 4.1 0.7 3.7 0.5" opacity="0.30"/><path d="M11.3 23.85H81.3" stroke="#111" stroke-width="1.1" stroke-dasharray="1.8 0.6 4.3 0.7 2.8 0.8 3.4 0.6 4.7 0.8 2.6 0.8 3.6 0.9 4.4 0.6 5.4 0.6 3.2 0.9 2.2 0.7 1.8 0.8 4.6 0.8 5.0 0.7 4.3 0.8 3.9 0.7 4.9 1.0" opacity="0.60"/><path d="M22.6 28.05H70.4" stroke="#111" stroke-width="1.1" stroke-dasharray="3.4 0.8 1.8 0.9 4.1 1.0 4.8 0.6 3.1 0.8 1.7 0.7 2.3 0.6 1.8 0.9 2.1 0.6 3.1 0.9 1.9 0.7 3.7 0.9 4.8 0.9" opacity="0.60"/><path d="M37.6 34.80H55.0" stroke="#111" stroke-width="1.0" stroke-dasharray="2.7 0.7 3.0 0.9 5.3 0.6 2.3 0.6 2.5 0.7" opacity="0.55"/><path d="M16.5 38.00H81.3" stroke="#111" stroke-width="1.0" stroke-dasharray="3.9 0.6 1.6 0.7 3.0 0.8 5.3 0.8 3.6 0.8 4.2 0.5 5.1 0.9 5.0 0.9 3.1 0.7 2.0 0.8 1.8 0.5 2.4 0.6 2.9 0.5 1.6 0.6 2.0 0.7 1.7 0.9 4.0 0.6" opacity="0.36"/><path d="M11.3 39.95H81.3" stroke="#111" stroke-width="1.0" stroke-dasharray="2.6 0.7 3.0 0.6 4.9 1.0 3.4 0.7 1.9 0.6 2.9 0.6 4.8 0.6 1.7 1.0 3.7 0.6 3.7 0.5 3.7 1.0 5.0 0.8 2.6 0.7 2.3 0.9 3.7 0.9 2.9 0.6 4.8 1.0" opacity="0.50"/><path d="M11.3 41.90H81.3" stroke="#111" stroke-width="1.0" stroke-dasharray="4.9 0.9 4.8 0.9 2.5 0.8 3.0 0.5 1.7 0.6 2.6 0.8 5.3 0.7 5.3 1.0 5.3 0.7 2.5 0.6 2.4 0.6 4.0 1.0 4.9 0.7 4.1 0.9 1.9 0.8 5.1 0.9" opacity="0.36"/><path d="M11.3 43.85H81.3" stroke="#111" stroke-width="1.0" stroke-dasharray="4.5 0.7 2.3 0.9 2.9 0.9 5.4 0.7 3.2 1.0 4.4 0.6 2.1 0.6 5.1 0.9 2.2 0.9 5.4 0.8 3.0 0.8 2.1 0.5 5.4 0.8 3.7 1.0 3.3 0.9 4.8 0.6" opacity="0.50"/><path d="M11.3 45.80H81.3" stroke="#111" stroke-width="1.0" stroke-dasharray="2.6 0.6 2.5 0.8 2.6 0.7 2.1 1.0 3.0 0.7 3.9 1.0 3.2 1.0 3.6 0.8 3.6 0.5 3.3 0.6 1.6 0.9 2.3 0.7 4.4 0.8 2.9 0.8 3.8 0.9 2.0 0.8 2.6 0.6 4.6 0.8 3.8 0.9" opacity="0.36"/><path d="M11.3 47.75H81.3" stroke="#111" stroke-width="1.0" stroke-dasharray="5.2 0.7 4.0 0.8 3.6 0.8 3.4 0.8 3.5 1.0 4.3 0.9 5.3 0.6 3.8 1.0 4.9 0.6 2.1 0.7 1.9 0.6 1.9 0.8 4.7 0.9 2.2 0.9 4.2 0.6 5.0 1.0" opacity="0.50"/><path d="M11.3 49.70H81.3" stroke="#111" stroke-width="1.0" stroke-dasharray="2.5 1.0 3.2 0.7 5.5 0.9 2.2 0.7 3.6 0.7 2.4 0.7 4.4 0.5 3.8 0.7 1.7 0.7 4.0 0.8 1.9 1.0 4.7 1.0 2.0 0.6 1.8 0.9 2.7 0.6 3.2 1.0 4.8 0.6 2.2 1.0" opacity="0.36"/><path d="M11.3 51.65H20.0" stroke="#111" stroke-width="1.0" stroke-dasharray="3.8 0.9 1.9 0.5 4.3 0.7" opacity="0.50"/><path d="M36.4 55.70H55.6" stroke="#111" stroke-width="1.0" stroke-dasharray="1.9 1.0 4.1 0.9 1.9 0.9 1.9 0.9 3.4 0.7 3.8 1.0" opacity="0.55"/><path d="M11.3 60.10H81.3" stroke="#111" stroke-width="1.0" stroke-dasharray="2.6 0.6 3.7 0.6 2.0 0.6 1.8 0.6 2.8 0.7 4.6 0.6 3.6 0.6 3.0 0.5 2.6 0.5 4.5 0.8 2.3 0.7 5.2 0.6 4.8 0.7 3.5 0.9 3.1 0.8 4.3 1.0 2.9 0.9 4.4 0.8" opacity="0.50"/><path d="M11.3 62.05H81.3" stroke="#111" stroke-width="1.0" stroke-dasharray="3.2 0.7 1.8 0.6 1.9 0.9 2.6 0.6 1.9 0.9 5.0 0.8 2.7 0.6 2.7 0.7 2.2 0.7 2.6 1.0 5.4 0.8 2.6 1.0 2.8 0.7 1.6 0.7 3.5 0.8 2.4 0.8 1.6 0.6 2.0 0.7 1.8 0.5 2.8 0.6 3.9 0.8" opacity="0.34"/><path d="M11.3 64.00H81.3" stroke="#111" stroke-width="1.0" stroke-dasharray="4.5 0.8 4.4 0.9 3.1 0.7 5.4 0.6 4.4 0.8 1.8 0.9 5.1 0.8 4.5 0.9 2.1 0.8 3.6 0.9 4.7 0.9 3.9 0.9 4.3 0.8 2.5 0.5 2.1 0.7 2.0 0.9" opacity="0.50"/><path d="M11.3 65.95H81.3" stroke="#111" stroke-width="1.0" stroke-dasharray="3.8 0.8 4.0 0.8 3.5 0.5 4.7 0.9 3.6 0.8 4.2 0.5 4.5 0.6 1.9 0.6 4.4 0.6 4.5 1.0 3.5 0.7 3.5 0.8 4.6 0.8 4.1 0.5 2.2 0.6 4.5 0.7" opacity="0.34"/><path d="M11.3 67.90H81.3" stroke="#111" stroke-width="1.0" stroke-dasharray="3.8 0.5 1.8 0.6 4.2 0.8 4.2 0.6 3.6 0.7 3.4 0.6 5.1 0.6 5.4 1.0 1.7 0.7 4.8 1.0 3.4 0.6 2.4 1.0 2.4 0.8 2.2 0.8 5.3 0.6 4.8 0.8" opacity="0.50"/><path d="M11.3 69.85H21.0" stroke="#111" stroke-width="1.0" stroke-dasharray="5.1 0.9 2.5 0.9 3.5 0.5" opacity="0.34"/><path d="M11.3 72.90H81.3" stroke="#111" stroke-width="1.0" stroke-dasharray="1.6 0.7 3.4 0.7 2.1 0.7 2.8 0.9 1.6 0.9 4.9 0.6 5.2 0.9 5.1 0.6 3.1 0.7 5.5 0.8 3.0 0.7 2.7 0.5 2.0 0.9 2.7 1.0 2.6 0.6 3.6 0.6 3.1 1.0 5.0 0.9" opacity="0.36"/><path d="M11.3 74.85H81.3" stroke="#111" stroke-width="1.0" stroke-dasharray="4.1 1.0 5.3 0.8 4.4 0.5 4.5 0.7 4.5 0.8 2.7 0.5 5.2 0.6 3.4 0.7 2.8 0.9 5.4 0.6 4.2 0.7 3.8 0.7 2.3 0.6 2.4 1.0 3.5 0.6 5.1 1.0" opacity="0.50"/><path d="M11.3 76.80H81.3" stroke="#111" stroke-width="1.0" stroke-dasharray="3.4 0.6 2.4 0.5 2.9 0.5 2.5 0.6 3.8 0.9 4.5 0.7 3.2 0.8 3.1 0.7 1.8 0.6 5.4 0.6 3.6 0.8 5.0 0.6 2.7 0.6 3.2 0.7 5.3 0.9 5.0 0.5 1.7 0.9" opacity="0.36"/><path d="M11.3 78.75H81.3" stroke="#111" stroke-width="1.0" stroke-dasharray="5.1 0.7 3.9 0.5 3.1 1.0 4.8 0.9 5.4 0.6 2.0 0.6 3.6 0.8 5.3 0.9 4.1 0.9 3.4 0.8 1.8 0.9 2.5 1.0 4.1 0.7 2.1 0.6 4.1 0.8 2.0 0.5 3.6 0.8" opacity="0.50"/><path d="M11.3 80.70H81.3" stroke="#111" stroke-width="1.0" stroke-dasharray="3.1 0.6 3.9 0.5 2.8 0.7 5.3 0.8 5.0 0.7 2.5 0.6 5.3 0.9 2.8 0.5 3.5 0.8 3.2 0.6 4.2 1.0 2.5 0.5 2.9 0.7 4.3 0.6 4.7 0.9 3.6 0.6" opacity="0.36"/><path d="M11.3 82.65H81.3" stroke="#111" stroke-width="1.0" stroke-dasharray="5.4 0.7 4.8 0.6 2.5 0.9 2.8 1.0 3.5 0.6 2.5 0.7 4.2 1.0 2.2 0.7 2.4 1.0 2.2 0.5 1.8 0.7 5.1 0.9 4.5 1.0 5.2 0.7 2.3 1.0 4.5 0.5 4.2 0.7" opacity="0.50"/><path d="M11.3 84.60H81.3" stroke="#111" stroke-width="1.0" stroke-dasharray="3.1 0.7 2.3 0.5 2.7 0.7 5.3 0.6 5.4 0.6 3.0 0.9 4.8 0.7 1.8 0.7 3.1 1.0 2.4 0.7 5.1 0.5 3.2 0.9 4.6 0.5 1.7 0.5 5.2 0.6 4.5 0.9 2.9 0.6" opacity="0.36"/><path d="M11.3 86.55H81.3" stroke="#111" stroke-width="1.0" stroke-dasharray="5.3 0.8 2.6 0.9 2.8 0.6 1.6 0.9 5.2 0.8 5.3 0.5 2.5 0.7 5.3 1.0 3.1 0.6 3.3 0.7 5.2 0.6 4.7 0.9 4.8 0.9 4.0 0.7 2.8 0.7 4.7 0.5" opacity="0.50"/><path d="M11.3 88.50H70.0" stroke="#111" stroke-width="1.0" stroke-dasharray="2.4 0.9 2.6 0.5 1.7 0.8 2.9 1.0 5.0 1.0 2.6 0.5 2.0 0.7 4.4 0.7 2.5 0.7 4.0 0.8 4.5 0.9 4.2 0.6 4.9 0.6 3.8 0.7 4.5 0.6" opacity="0.36"/><path d="M11.3 94.80H39.0" stroke="#111" stroke-width="1.2" stroke-dasharray="2.6 0.6 2.2 0.9 3.9 0.7 3.1 1.0 3.6 0.6 4.8 0.8 5.5 0.6" opacity="0.60"/><path d="M39.6 94.70H81.3" stroke="#111" stroke-width="1.0" stroke-dasharray="3.5 0.9 4.9 1.0 1.8 0.6 2.1 0.6 5.4 0.8 5.2 0.7 5.0 0.7 2.6 0.9 5.3 0.6" opacity="0.28"/><path d="M11.3 96.20H39.0" stroke="#111" stroke-width="0.8" stroke-dasharray="3.9 0.8 2.4 0.7 2.2 0.6 2.6 0.8 4.1 0.6 1.6 0.7 4.2 0.6 2.8 0.6" opacity="0.30"/><path d="M37.6 99.35H55.6" stroke="#111" stroke-width="1.1" stroke-dasharray="4.7 0.8 1.8 0.6 3.1 0.8 4.1 0.5 2.2 0.8" opacity="0.70"/><rect x="11.3" y="103.3" width="28.2" height="2.0" fill="#111" opacity="0.90"/><path d="M41.0 104.30H79.5" stroke="#111" stroke-width="1.0" stroke-dasharray="3.2 0.6 2.8 1.0 2.8 0.8 3.0 0.7 5.0 1.0 3.0 0.6 4.4 0.6 1.6 1.0 3.3 0.9 3.2 0.9" opacity="0.38"/><path d="M11.3 107.75H81.3" stroke="#111" stroke-width="1.1" stroke-dasharray="3.4 0.6 1.7 0.8 4.1 1.0 1.9 0.8 3.0 0.8 2.2 0.6 3.6 1.0 2.0 0.7 4.7 1.0 2.4 0.6 5.3 1.0 3.5 0.5 5.2 0.7 5.1 0.8 4.8 0.6 4.7 0.6 3.2 0.9" opacity="0.45"/><path d="M10.6 114.70H22.4" stroke="#111" stroke-width="0.8" stroke-dasharray="4.8 0.6 2.5 0.7 3.6 0.7" opacity="0.28"/><rect x="22.4" y="115.2" width="12.6" height="0.6" fill="#111" opacity="0.18"/></g></g></svg>
<span class="t " style="left:837.6px;top:576px;font-size:33.2px;line-height:33.2px;color:#2f3740;transform:scaleX(0.9131);font-weight:700;opacity:.93;">SUPPLIER AGREEMENT AND CERTIFICATION</span>
<span class="t " style="left:836.8px;top:623px;font-size:24.9px;line-height:24.9px;color:#5e6c7b;transform:scaleX(0.9946);">Feb 19, 2021 at 1:26pm</span>
<span class="t " style="left:837.7px;top:679px;font-size:24.9px;line-height:24.9px;color:#5a6878;transform:scaleX(0.9305);font-weight:700;opacity:.93;">Signers: 3</span>
<div class="btn" style="left:1662px;top:572px;width:200px"></div>
<span class="t " style="left:1687.5px;top:591px;font-size:25.9px;line-height:25.9px;color:#2f3740;transform:scaleX(0.9384);font-weight:700;opacity:.93;">Invite to Sign</span>
<div class="btn" style="left:1882px;top:572px;width:256px"></div>
<span class="t " style="left:1954.1px;top:591px;font-size:25.9px;line-height:25.9px;color:#2f3740;transform:scaleX(0.9385);font-weight:700;opacity:.93;">Invite via Link</span>
<svg style="left:1907px;top:587px" width="34" height="32" viewBox="0 0 34 32" fill="none" stroke="#2f3740" stroke-width="3.900" stroke-linecap="round"><g transform="translate(17 16) rotate(-35)"><path d="M-4.500 4.750H-10.800A4 4 0 0 1 -14.800 0.750V-0.750A4 4 0 0 1 -10.800 -4.750H-2A4 4 0 0 1 2 -0.750V0.300"/><path d="M4.500 -4.750H10.800A4 4 0 0 1 14.800 -0.750V0.750A4 4 0 0 1 10.800 4.750H2A4 4 0 0 1 -2 0.750V-0.300"/></g></svg>
<div class="btn" style="left:2158.2px;top:572px;width:155.4000000000001px"></div>
<span class="t " style="left:2230.4px;top:591px;font-size:25.9px;line-height:25.9px;color:#2f3740;transform:scaleX(1.0017);font-weight:700;opacity:.93;">More</span>
<svg style="left:2183.8px;top:600px" width="34" height="8" viewBox="0 0 34 8" fill="#2f3740"><circle cx="4" cy="4" r="3.800"/><circle cx="16.600" cy="4" r="3.800"/><circle cx="29.200" cy="4" r="3.800"/></svg>
<div class="hr" style="left:638px;top:748px;width:1712px"></div>
<div class="cb" style="left:658px;top:830px"></div>
<svg style="left:709px;top:781px" width="98" height="130" viewBox="0 0 98 130" fill="none"><g transform="translate(1.50 1.30)"><rect x="0.5" y="0.5" width="94" height="125.400" rx="4.500" fill="#fff" stroke="#e6e7ea" stroke-width="1.200"/><g transform="translate(0.9 0.7)"><path d="M32.5 14.10H60.0" stroke="#111" stroke-width="1.0" stroke-dasharray="2.9 0.6 4.1 0.5 3.7 0.7 1.8 0.8 1.7 0.7 1.9 0.5 3.3 0.9 2.1 0.6 4.0 1.0" opacity="0.75"/><path d="M38.3 16.80H54.3" stroke="#111" stroke-width="1.2" stroke-dasharray="3.9 0.7 5.4 0.5 4.9 0.6" opacity="0.80"/><path d="M38.0 19.40H54.3" stroke="#111" stroke-width="1.0" stroke-dasharray="2.2 0.6 2.8 0.9 2.3 0.8 4.1 0.7 3.7 0.5" opacity="0.30"/><path d="M11.3 23.85H81.3" stroke="#111" stroke-width="1.1" stroke-dasharray="1.8 0.6 4.3 0.7 2.8 0.8 3.4 0.6 4.7 0.8 2.6 0.8 3.6 0.9 4.4 0.6 5.4 0.6 3.2 0.9 2.2 0.7 1.8 0.8 4.6 0.8 5.0 0.7 4.3 0.8 3.9 0.7 4.9 1.0" opacity="0.60"/><path d="M22.6 28.05H70.4" stroke="#111" stroke-width="1.1" stroke-dasharray="3.4 0.8 1.8 0.9 4.1 1.0 4.8 0.6 3.1 0.8 1.7 0.7 2.3 0.6 1.8 0.9 2.1 0.6 3.1 0.9 1.9 0.7 3.7 0.9 4.8 0.9" opacity="0.60"/><path d="M37.6 34.80H55.0" stroke="#111" stroke-width="1.0" stroke-dasharray="2.7 0.7 3.0 0.9 5.3 0.6 2.3 0.6 2.5 0.7" opacity="0.55"/><path d="M16.5 38.00H81.3" stroke="#111" stroke-width="1.0" stroke-dasharray="3.9 0.6 1.6 0.7 3.0 0.8 5.3 0.8 3.6 0.8 4.2 0.5 5.1 0.9 5.0 0.9 3.1 0.7 2.0 0.8 1.8 0.5 2.4 0.6 2.9 0.5 1.6 0.6 2.0 0.7 1.7 0.9 4.0 0.6" opacity="0.36"/><path d="M11.3 39.95H81.3" stroke="#111" stroke-width="1.0" stroke-dasharray="2.6 0.7 3.0 0.6 4.9 1.0 3.4 0.7 1.9 0.6 2.9 0.6 4.8 0.6 1.7 1.0 3.7 0.6 3.7 0.5 3.7 1.0 5.0 0.8 2.6 0.7 2.3 0.9 3.7 0.9 2.9 0.6 4.8 1.0" opacity="0.50"/><path d="M11.3 41.90H81.3" stroke="#111" stroke-width="1.0" stroke-dasharray="4.9 0.9 4.8 0.9 2.5 0.8 3.0 0.5 1.7 0.6 2.6 0.8 5.3 0.7 5.3 1.0 5.3 0.7 2.5 0.6 2.4 0.6 4.0 1.0 4.9 0.7 4.1 0.9 1.9 0.8 5.1 0.9" opacity="0.36"/><path d="M11.3 43.85H81.3" stroke="#111" stroke-width="1.0" stroke-dasharray="4.5 0.7 2.3 0.9 2.9 0.9 5.4 0.7 3.2 1.0 4.4 0.6 2.1 0.6 5.1 0.9 2.2 0.9 5.4 0.8 3.0 0.8 2.1 0.5 5.4 0.8 3.7 1.0 3.3 0.9 4.8 0.6" opacity="0.50"/><path d="M11.3 45.80H81.3" stroke="#111" stroke-width="1.0" stroke-dasharray="2.6 0.6 2.5 0.8 2.6 0.7 2.1 1.0 3.0 0.7 3.9 1.0 3.2 1.0 3.6 0.8 3.6 0.5 3.3 0.6 1.6 0.9 2.3 0.7 4.4 0.8 2.9 0.8 3.8 0.9 2.0 0.8 2.6 0.6 4.6 0.8 3.8 0.9" opacity="0.36"/><path d="M11.3 47.75H81.3" stroke="#111" stroke-width="1.0" stroke-dasharray="5.2 0.7 4.0 0.8 3.6 0.8 3.4 0.8 3.5 1.0 4.3 0.9 5.3 0.6 3.8 1.0 4.9 0.6 2.1 0.7 1.9 0.6 1.9 0.8 4.7 0.9 2.2 0.9 4.2 0.6 5.0 1.0" opacity="0.50"/><path d="M11.3 49.70H81.3" stroke="#111" stroke-width="1.0" stroke-dasharray="2.5 1.0 3.2 0.7 5.5 0.9 2.2 0.7 3.6 0.7 2.4 0.7 4.4 0.5 3.8 0.7 1.7 0.7 4.0 0.8 1.9 1.0 4.7 1.0 2.0 0.6 1.8 0.9 2.7 0.6 3.2 1.0 4.8 0.6 2.2 1.0" opacity="0.36"/><path d="M11.3 51.65H20.0" stroke="#111" stroke-width="1.0" stroke-dasharray="3.8 0.9 1.9 0.5 4.3 0.7" opacity="0.50"/><path d="M36.4 55.70H55.6" stroke="#111" stroke-width="1.0" stroke-dasharray="1.9 1.0 4.1 0.9 1.9 0.9 1.9 0.9 3.4 0.7 3.8 1.0" opacity="0.55"/><path d="M11.3 60.10H81.3" stroke="#111" stroke-width="1.0" stroke-dasharray="2.6 0.6 3.7 0.6 2.0 0.6 1.8 0.6 2.8 0.7 4.6 0.6 3.6 0.6 3.0 0.5 2.6 0.5 4.5 0.8 2.3 0.7 5.2 0.6 4.8 0.7 3.5 0.9 3.1 0.8 4.3 1.0 2.9 0.9 4.4 0.8" opacity="0.50"/><path d="M11.3 62.05H81.3" stroke="#111" stroke-width="1.0" stroke-dasharray="3.2 0.7 1.8 0.6 1.9 0.9 2.6 0.6 1.9 0.9 5.0 0.8 2.7 0.6 2.7 0.7 2.2 0.7 2.6 1.0 5.4 0.8 2.6 1.0 2.8 0.7 1.6 0.7 3.5 0.8 2.4 0.8 1.6 0.6 2.0 0.7 1.8 0.5 2.8 0.6 3.9 0.8" opacity="0.34"/><path d="M11.3 64.00H81.3" stroke="#111" stroke-width="1.0" stroke-dasharray="4.5 0.8 4.4 0.9 3.1 0.7 5.4 0.6 4.4 0.8 1.8 0.9 5.1 0.8 4.5 0.9 2.1 0.8 3.6 0.9 4.7 0.9 3.9 0.9 4.3 0.8 2.5 0.5 2.1 0.7 2.0 0.9" opacity="0.50"/><path d="M11.3 65.95H81.3" stroke="#111" stroke-width="1.0" stroke-dasharray="3.8 0.8 4.0 0.8 3.5 0.5 4.7 0.9 3.6 0.8 4.2 0.5 4.5 0.6 1.9 0.6 4.4 0.6 4.5 1.0 3.5 0.7 3.5 0.8 4.6 0.8 4.1 0.5 2.2 0.6 4.5 0.7" opacity="0.34"/><path d="M11.3 67.90H81.3" stroke="#111" stroke-width="1.0" stroke-dasharray="3.8 0.5 1.8 0.6 4.2 0.8 4.2 0.6 3.6 0.7 3.4 0.6 5.1 0.6 5.4 1.0 1.7 0.7 4.8 1.0 3.4 0.6 2.4 1.0 2.4 0.8 2.2 0.8 5.3 0.6 4.8 0.8" opacity="0.50"/><path d="M11.3 69.85H21.0" stroke="#111" stroke-width="1.0" stroke-dasharray="5.1 0.9 2.5 0.9 3.5 0.5" opacity="0.34"/><path d="M11.3 72.90H81.3" stroke="#111" stroke-width="1.0" stroke-dasharray="1.6 0.7 3.4 0.7 2.1 0.7 2.8 0.9 1.6 0.9 4.9 0.6 5.2 0.9 5.1 0.6 3.1 0.7 5.5 0.8 3.0 0.7 2.7 0.5 2.0 0.9 2.7 1.0 2.6 0.6 3.6 0.6 3.1 1.0 5.0 0.9" opacity="0.36"/><path d="M11.3 74.85H81.3" stroke="#111" stroke-width="1.0" stroke-dasharray="4.1 1.0 5.3 0.8 4.4 0.5 4.5 0.7 4.5 0.8 2.7 0.5 5.2 0.6 3.4 0.7 2.8 0.9 5.4 0.6 4.2 0.7 3.8 0.7 2.3 0.6 2.4 1.0 3.5 0.6 5.1 1.0" opacity="0.50"/><path d="M11.3 76.80H81.3" stroke="#111" stroke-width="1.0" stroke-dasharray="3.4 0.6 2.4 0.5 2.9 0.5 2.5 0.6 3.8 0.9 4.5 0.7 3.2 0.8 3.1 0.7 1.8 0.6 5.4 0.6 3.6 0.8 5.0 0.6 2.7 0.6 3.2 0.7 5.3 0.9 5.0 0.5 1.7 0.9" opacity="0.36"/><path d="M11.3 78.75H81.3" stroke="#111" stroke-width="1.0" stroke-dasharray="5.1 0.7 3.9 0.5 3.1 1.0 4.8 0.9 5.4 0.6 2.0 0.6 3.6 0.8 5.3 0.9 4.1 0.9 3.4 0.8 1.8 0.9 2.5 1.0 4.1 0.7 2.1 0.6 4.1 0.8 2.0 0.5 3.6 0.8" opacity="0.50"/><path d="M11.3 80.70H81.3" stroke="#111" stroke-width="1.0" stroke-dasharray="3.1 0.6 3.9 0.5 2.8 0.7 5.3 0.8 5.0 0.7 2.5 0.6 5.3 0.9 2.8 0.5 3.5 0.8 3.2 0.6 4.2 1.0 2.5 0.5 2.9 0.7 4.3 0.6 4.7 0.9 3.6 0.6" opacity="0.36"/><path d="M11.3 82.65H81.3" stroke="#111" stroke-width="1.0" stroke-dasharray="5.4 0.7 4.8 0.6 2.5 0.9 2.8 1.0 3.5 0.6 2.5 0.7 4.2 1.0 2.2 0.7 2.4 1.0 2.2 0.5 1.8 0.7 5.1 0.9 4.5 1.0 5.2 0.7 2.3 1.0 4.5 0.5 4.2 0.7" opacity="0.50"/><path d="M11.3 84.60H81.3" stroke="#111" stroke-width="1.0" stroke-dasharray="3.1 0.7 2.3 0.5 2.7 0.7 5.3 0.6 5.4 0.6 3.0 0.9 4.8 0.7 1.8 0.7 3.1 1.0 2.4 0.7 5.1 0.5 3.2 0.9 4.6 0.5 1.7 0.5 5.2 0.6 4.5 0.9 2.9 0.6" opacity="0.36"/><path d="M11.3 86.55H81.3" stroke="#111" stroke-width="1.0" stroke-dasharray="5.3 0.8 2.6 0.9 2.8 0.6 1.6 0.9 5.2 0.8 5.3 0.5 2.5 0.7 5.3 1.0 3.1 0.6 3.3 0.7 5.2 0.6 4.7 0.9 4.8 0.9 4.0 0.7 2.8 0.7 4.7 0.5" opacity="0.50"/><path d="M11.3 88.50H70.0" stroke="#111" stroke-width="1.0" stroke-dasharray="2.4 0.9 2.6 0.5 1.7 0.8 2.9 1.0 5.0 1.0 2.6 0.5 2.0 0.7 4.4 0.7 2.5 0.7 4.0 0.8 4.5 0.9 4.2 0.6 4.9 0.6 3.8 0.7 4.5 0.6" opacity="0.36"/><path d="M11.3 94.80H39.0" stroke="#111" stroke-width="1.2" stroke-dasharray="2.6 0.6 2.2 0.9 3.9 0.7 3.1 1.0 3.6 0.6 4.8 0.8 5.5 0.6" opacity="0.60"/><path d="M39.6 94.70H81.3" stroke="#111" stroke-width="1.0" stroke-dasharray="3.5 0.9 4.9 1.0 1.8 0.6 2.1 0.6 5.4 0.8 5.2 0.7 5.0 0.7 2.6 0.9 5.3 0.6" opacity="0.28"/><path d="M11.3 96.20H39.0" stroke="#111" stroke-width="0.8" stroke-dasharray="3.9 0.8 2.4 0.7 2.2 0.6 2.6 0.8 4.1 0.6 1.6 0.7 4.2 0.6 2.8 0.6" opacity="0.30"/><path d="M37.6 99.35H55.6" stroke="#111" stroke-width="1.1" stroke-dasharray="4.7 0.8 1.8 0.6 3.1 0.8 4.1 0.5 2.2 0.8" opacity="0.70"/><rect x="11.3" y="103.3" width="28.2" height="2.0" fill="#111" opacity="0.90"/><path d="M41.0 104.30H79.5" stroke="#111" stroke-width="1.0" stroke-dasharray="3.2 0.6 2.8 1.0 2.8 0.8 3.0 0.7 5.0 1.0 3.0 0.6 4.4 0.6 1.6 1.0 3.3 0.9 3.2 0.9" opacity="0.38"/><path d="M11.3 107.75H81.3" stroke="#111" stroke-width="1.1" stroke-dasharray="3.4 0.6 1.7 0.8 4.1 1.0 1.9 0.8 3.0 0.8 2.2 0.6 3.6 1.0 2.0 0.7 4.7 1.0 2.4 0.6 5.3 1.0 3.5 0.5 5.2 0.7 5.1 0.8 4.8 0.6 4.7 0.6 3.2 0.9" opacity="0.45"/><path d="M10.6 114.70H22.4" stroke="#111" stroke-width="0.8" stroke-dasharray="4.8 0.6 2.5 0.7 3.6 0.7" opacity="0.28"/><rect x="22.4" y="115.2" width="12.6" height="0.6" fill="#111" opacity="0.18"/></g></g></svg>
<span class="t " style="left:837.6px;top:786px;font-size:33.2px;line-height:33.2px;color:#2f3740;transform:scaleX(0.9131);font-weight:700;opacity:.93;">SUPPLIER AGREEMENT AND CERTIFICATION</span>
<span class="t " style="left:836.8px;top:833px;font-size:24.9px;line-height:24.9px;color:#5e6c7b;transform:scaleX(0.9946);">Feb 19, 2021 at 1:25pm</span>
<div class="abs" style="left:838px;top:878px;width:158px;height:48px;border-radius:8px;background:#e4f1ea"></div>
<div class="abs" style="left:862px;top:894px;width:16px;height:16px;border-radius:50%;background:#5fae74"></div>
<span class="t " style="left:893.5px;top:889px;font-size:24.9px;line-height:24.9px;color:#5a6878;transform:scaleX(0.9450);font-weight:700;opacity:.93;">Signed</span>
<div class="btn" style="left:1988px;top:782px;width:149.5px"></div>
<span class="t " style="left:2004.7px;top:801px;font-size:25.9px;line-height:25.9px;color:#2f3740;transform:scaleX(0.9617);font-weight:700;opacity:.93;">Download</span>
<div class="btn" style="left:2158.2px;top:782px;width:155.4000000000001px"></div>
<span class="t " style="left:2230.4px;top:801px;font-size:25.9px;line-height:25.9px;color:#2f3740;transform:scaleX(1.0017);font-weight:700;opacity:.93;">More</span>
<svg style="left:2183.8px;top:810px" width="34" height="8" viewBox="0 0 34 8" fill="#2f3740"><circle cx="4" cy="4" r="3.800"/><circle cx="16.600" cy="4" r="3.800"/><circle cx="29.200" cy="4" r="3.800"/></svg>
<span class="t " style="left:837.7px;top:953px;font-size:24.9px;line-height:24.9px;color:#5a6878;transform:scaleX(0.9353);font-weight:700;opacity:.93;">Signers (3):</span>
<span class="t " style="left:989.4px;top:953px;font-size:24.9px;line-height:24.9px;color:#5a6878;transform:scaleX(1.0600);">1</span>
<svg style="left:1012px;top:954px" width="24" height="24" viewBox="0 0 24 24"><circle cx="12" cy="12" r="12" fill="#5aa56f"/><path d="M5.600 12.600l4.600 4.500 8.600-9.200" fill="none" stroke="#fff" stroke-width="3.400" stroke-linecap="round" stroke-linejoin="round"/></svg>
<span class="t " style="left:1042.5px;top:953px;font-size:24.9px;line-height:24.9px;color:#5a6878;transform:scaleX(0.9709);font-weight:700;opacity:.93;">moorejessica4478@gmail.com</span>
<span class="t " style="left:1419.9px;top:953px;font-size:24.9px;line-height:24.9px;color:#5a6878;transform:scaleX(1.0600);">2</span>
<svg style="left:1442px;top:954px" width="24" height="24" viewBox="0 0 24 24"><circle cx="12" cy="12" r="12" fill="#5aa56f"/><path d="M5.600 12.600l4.600 4.500 8.600-9.200" fill="none" stroke="#fff" stroke-width="3.400" stroke-linecap="round" stroke-linejoin="round"/></svg>
<span class="t " style="left:1475.1px;top:953px;font-size:24.9px;line-height:24.9px;color:#5a6878;transform:scaleX(1.0643);">charles.galloway198@email.com</span>
<span class="t " style="left:1874.5px;top:953px;font-size:24.9px;line-height:24.9px;color:#5a6878;transform:scaleX(1.0600);">3</span>
<svg style="left:1898px;top:954px" width="24" height="24" viewBox="0 0 24 24"><circle cx="12" cy="12" r="12" fill="#5aa56f"/><path d="M5.600 12.600l4.600 4.500 8.600-9.200" fill="none" stroke="#fff" stroke-width="3.400" stroke-linecap="round" stroke-linejoin="round"/></svg>
<span class="t " style="left:1931.9px;top:953px;font-size:24.9px;line-height:24.9px;color:#5a6878;transform:scaleX(1.0593);">heather.arroyo@email.com</span>
<div class="hr" style="left:638px;top:1022px;width:1712px"></div>
<div class="cb" style="left:658px;top:1104px"></div>
<svg style="left:709px;top:1055px" width="98" height="130" viewBox="0 0 98 130" fill="none"><g transform="translate(1.50 1.30)"><rect x="0.5" y="0.5" width="94" height="125.400" rx="4.500" fill="#fff" stroke="#e6e7ea" stroke-width="1.200"/><g transform="translate(0.9 0.7)"><path d="M32.5 14.10H60.0" stroke="#111" stroke-width="1.0" stroke-dasharray="2.9 0.6 4.1 0.5 3.7 0.7 1.8 0.8 1.7 0.7 1.9 0.5 3.3 0.9 2.1 0.6 4.0 1.0" opacity="0.75"/><path d="M38.3 16.80H54.3" stroke="#111" stroke-width="1.2" stroke-dasharray="3.9 0.7 5.4 0.5 4.9 0.6" opacity="0.80"/><path d="M38.0 19.40H54.3" stroke="#111" stroke-width="1.0" stroke-dasharray="2.2 0.6 2.8 0.9 2.3 0.8 4.1 0.7 3.7 0.5" opacity="0.30"/><path d="M11.3 23.85H81.3" stroke="#111" stroke-width="1.1" stroke-dasharray="1.8 0.6 4.3 0.7 2.8 0.8 3.4 0.6 4.7 0.8 2.6 0.8 3.6 0.9 4.4 0.6 5.4 0.6 3.2 0.9 2.2 0.7 1.8 0.8 4.6 0.8 5.0 0.7 4.3 0.8 3.9 0.7 4.9 1.0" opacity="0.60"/><path d="M22.6 28.05H70.4" stroke="#111" stroke-width="1.1" stroke-dasharray="3.4 0.8 1.8 0.9 4.1 1.0 4.8 0.6 3.1 0.8 1.7 0.7 2.3 0.6 1.8 0.9 2.1 0.6 3.1 0.9 1.9 0.7 3.7 0.9 4.8 0.9" opacity="0.60"/><path d="M37.6 34.80H55.0" stroke="#111" stroke-width="1.0" stroke-dasharray="2.7 0.7 3.0 0.9 5.3 0.6 2.3 0.6 2.5 0.7" opacity="0.55"/><path d="M16.5 38.00H81.3" stroke="#111" stroke-width="1.0" stroke-dasharray="3.9 0.6 1.6 0.7 3.0 0.8 5.3 0.8 3.6 0.8 4.2 0.5 5.1 0.9 5.0 0.9 3.1 0.7 2.0 0.8 1.8 0.5 2.4 0.6 2.9 0.5 1.6 0.6 2.0 0.7 1.7 0.9 4.0 0.6" opacity="0.36"/><path d="M11.3 39.95H81.3" stroke="#111" stroke-width="1.0" stroke-dasharray="2.6 0.7 3.0 0.6 4.9 1.0 3.4 0.7 1.9 0.6 2.9 0.6 4.8 0.6 1.7 1.0 3.7 0.6 3.7 0.5 3.7 1.0 5.0 0.8 2.6 0.7 2.3 0.9 3.7 0.9 2.9 0.6 4.8 1.0" opacity="0.50"/><path d="M11.3 41.90H81.3" stroke="#111" stroke-width="1.0" stroke-dasharray="4.9 0.9 4.8 0.9 2.5 0.8 3.0 0.5 1.7 0.6 2.6 0.8 5.3 0.7 5.3 1.0 5.3 0.7 2.5 0.6 2.4 0.6 4.0 1.0 4.9 0.7 4.1 0.9 1.9 0.8 5.1 0.9" opacity="0.36"/><path d="M11.3 43.85H81.3" stroke="#111" stroke-width="1.0" stroke-dasharray="4.5 0.7 2.3 0.9 2.9 0.9 5.4 0.7 3.2 1.0 4.4 0.6 2.1 0.6 5.1 0.9 2.2 0.9 5.4 0.8 3.0 0.8 2.1 0.5 5.4 0.8 3.7 1.0 3.3 0.9 4.8 0.6" opacity="0.50"/><path d="M11.3 45.80H81.3" stroke="#111" stroke-width="1.0" stroke-dasharray="2.6 0.6 2.5 0.8 2.6 0.7 2.1 1.0 3.0 0.7 3.9 1.0 3.2 1.0 3.6 0.8 3.6 0.5 3.3 0.6 1.6 0.9 2.3 0.7 4.4 0.8 2.9 0.8 3.8 0.9 2.0 0.8 2.6 0.6 4.6 0.8 3.8 0.9" opacity="0.36"/><path d="M11.3 47.75H81.3" stroke="#111" stroke-width="1.0" stroke-dasharray="5.2 0.7 4.0 0.8 3.6 0.8 3.4 0.8 3.5 1.0 4.3 0.9 5.3 0.6 3.8 1.0 4.9 0.6 2.1 0.7 1.9 0.6 1.9 0.8 4.7 0.9 2.2 0.9 4.2 0.6 5.0 1.0" opacity="0.50"/><path d="M11.3 49.70H81.3" stroke="#111" stroke-width="1.0" stroke-dasharray="2.5 1.0 3.2 0.7 5.5 0.9 2.2 0.7 3.6 0.7 2.4 0.7 4.4 0.5 3.8 0.7 1.7 0.7 4.0 0.8 1.9 1.0 4.7 1.0 2.0 0.6 1.8 0.9 2.7 0.6 3.2 1.0 4.8 0.6 2.2 1.0" opacity="0.36"/><path d="M11.3 51.65H20.0" stroke="#111" stroke-width="1.0" stroke-dasharray="3.8 0.9 1.9 0.5 4.3 0.7" opacity="0.50"/><path d="M36.4 55.70H55.6" stroke="#111" stroke-width="1.0" stroke-dasharray="1.9 1.0 4.1 0.9 1.9 0.9 1.9 0.9 3.4 0.7 3.8 1.0" opacity="0.55"/><path d="M11.3 60.10H81.3" stroke="#111" stroke-width="1.0" stroke-dasharray="2.6 0.6 3.7 0.6 2.0 0.6 1.8 0.6 2.8 0.7 4.6 0.6 3.6 0.6 3.0 0.5 2.6 0.5 4.5 0.8 2.3 0.7 5.2 0.6 4.8 0.7 3.5 0.9 3.1 0.8 4.3 1.0 2.9 0.9 4.4 0.8" opacity="0.50"/><path d="M11.3 62.05H81.3" stroke="#111" stroke-width="1.0" stroke-dasharray="3.2 0.7 1.8 0.6 1.9 0.9 2.6 0.6 1.9 0.9 5.0 0.8 2.7 0.6 2.7 0.7 2.2 0.7 2.6 1.0 5.4 0.8 2.6 1.0 2.8 0.7 1.6 0.7 3.5 0.8 2.4 0.8 1.6 0.6 2.0 0.7 1.8 0.5 2.8 0.6 3.9 0.8" opacity="0.34"/><path d="M11.3 64.00H81.3" stroke="#111" stroke-width="1.0" stroke-dasharray="4.5 0.8 4.4 0.9 3.1 0.7 5.4 0.6 4.4 0.8 1.8 0.9 5.1 0.8 4.5 0.9 2.1 0.8 3.6 0.9 4.7 0.9 3.9 0.9 4.3 0.8 2.5 0.5 2.1 0.7 2.0 0.9" opacity="0.50"/><path d="M11.3 65.95H81.3" stroke="#111" stroke-width="1.0" stroke-dasharray="3.8 0.8 4.0 0.8 3.5 0.5 4.7 0.9 3.6 0.8 4.2 0.5 4.5 0.6 1.9 0.6 4.4 0.6 4.5 1.0 3.5 0.7 3.5 0.8 4.6 0.8 4.1 0.5 2.2 0.6 4.5 0.7" opacity="0.34"/><path d="M11.3 67.90H81.3" stroke="#111" stroke-width="1.0" stroke-dasharray="3.8 0.5 1.8 0.6 4.2 0.8 4.2 0.6 3.6 0.7 3.4 0.6 5.1 0.6 5.4 1.0 1.7 0.7 4.8 1.0 3.4 0.6 2.4 1.0 2.4 0.8 2.2 0.8 5.3 0.6 4.8 0.8" opacity="0.50"/><path d="M11.3 69.85H21.0" stroke="#111" stroke-width="1.0" stroke-dasharray="5.1 0.9 2.5 0.9 3.5 0.5" opacity="0.34"/><path d="M11.3 72.90H81.3" stroke="#111" stroke-width="1.0" stroke-dasharray="1.6 0.7 3.4 0.7 2.1 0.7 2.8 0.9 1.6 0.9 4.9 0.6 5.2 0.9 5.1 0.6 3.1 0.7 5.5 0.8 3.0 0.7 2.7 0.5 2.0 0.9 2.7 1.0 2.6 0.6 3.6 0.6 3.1 1.0 5.0 0.9" opacity="0.36"/><path d="M11.3 74.85H81.3" stroke="#111" stroke-width="1.0" stroke-dasharray="4.1 1.0 5.3 0.8 4.4 0.5 4.5 0.7 4.5 0.8 2.7 0.5 5.2 0.6 3.4 0.7 2.8 0.9 5.4 0.6 4.2 0.7 3.8 0.7 2.3 0.6 2.4 1.0 3.5 0.6 5.1 1.0" opacity="0.50"/><path d="M11.3 76.80H81.3" stroke="#111" stroke-width="1.0" stroke-dasharray="3.4 0.6 2.4 0.5 2.9 0.5 2.5 0.6 3.8 0.9 4.5 0.7 3.2 0.8 3.1 0.7 1.8 0.6 5.4 0.6 3.6 0.8 5.0 0.6 2.7 0.6 3.2 0.7 5.3 0.9 5.0 0.5 1.7 0.9" opacity="0.36"/><path d="M11.3 78.75H81.3" stroke="#111" stroke-width="1.0" stroke-dasharray="5.1 0.7 3.9 0.5 3.1 1.0 4.8 0.9 5.4 0.6 2.0 0.6 3.6 0.8 5.3 0.9 4.1 0.9 3.4 0.8 1.8 0.9 2.5 1.0 4.1 0.7 2.1 0.6 4.1 0.8 2.0 0.5 3.6 0.8" opacity="0.50"/><path d="M11.3 80.70H81.3" stroke="#111" stroke-width="1.0" stroke-dasharray="3.1 0.6 3.9 0.5 2.8 0.7 5.3 0.8 5.0 0.7 2.5 0.6 5.3 0.9 2.8 0.5 3.5 0.8 3.2 0.6 4.2 1.0 2.5 0.5 2.9 0.7 4.3 0.6 4.7 0.9 3.6 0.6" opacity="0.36"/><path d="M11.3 82.65H81.3" stroke="#111" stroke-width="1.0" stroke-dasharray="5.4 0.7 4.8 0.6 2.5 0.9 2.8 1.0 3.5 0.6 2.5 0.7 4.2 1.0 2.2 0.7 2.4 1.0 2.2 0.5 1.8 0.7 5.1 0.9 4.5 1.0 5.2 0.7 2.3 1.0 4.5 0.5 4.2 0.7" opacity="0.50"/><path d="M11.3 84.60H81.3" stroke="#111" stroke-width="1.0" stroke-dasharray="3.1 0.7 2.3 0.5 2.7 0.7 5.3 0.6 5.4 0.6 3.0 0.9 4.8 0.7 1.8 0.7 3.1 1.0 2.4 0.7 5.1 0.5 3.2 0.9 4.6 0.5 1.7 0.5 5.2 0.6 4.5 0.9 2.9 0.6" opacity="0.36"/><path d="M11.3 86.55H81.3" stroke="#111" stroke-width="1.0" stroke-dasharray="5.3 0.8 2.6 0.9 2.8 0.6 1.6 0.9 5.2 0.8 5.3 0.5 2.5 0.7 5.3 1.0 3.1 0.6 3.3 0.7 5.2 0.6 4.7 0.9 4.8 0.9 4.0 0.7 2.8 0.7 4.7 0.5" opacity="0.50"/><path d="M11.3 88.50H70.0" stroke="#111" stroke-width="1.0" stroke-dasharray="2.4 0.9 2.6 0.5 1.7 0.8 2.9 1.0 5.0 1.0 2.6 0.5 2.0 0.7 4.4 0.7 2.5 0.7 4.0 0.8 4.5 0.9 4.2 0.6 4.9 0.6 3.8 0.7 4.5 0.6" opacity="0.36"/><path d="M11.3 94.80H39.0" stroke="#111" stroke-width="1.2" stroke-dasharray="2.6 0.6 2.2 0.9 3.9 0.7 3.1 1.0 3.6 0.6 4.8 0.8 5.5 0.6" opacity="0.60"/><path d="M39.6 94.70H81.3" stroke="#111" stroke-width="1.0" stroke-dasharray="3.5 0.9 4.9 1.0 1.8 0.6 2.1 0.6 5.4 0.8 5.2 0.7 5.0 0.7 2.6 0.9 5.3 0.6" opacity="0.28"/><path d="M11.3 96.20H39.0" stroke="#111" stroke-width="0.8" stroke-dasharray="3.9 0.8 2.4 0.7 2.2 0.6 2.6 0.8 4.1 0.6 1.6 0.7 4.2 0.6 2.8 0.6" opacity="0.30"/><path d="M37.6 99.35H55.6" stroke="#111" stroke-width="1.1" stroke-dasharray="4.7 0.8 1.8 0.6 3.1 0.8 4.1 0.5 2.2 0.8" opacity="0.70"/><rect x="11.3" y="103.3" width="28.2" height="2.0" fill="#111" opacity="0.90"/><path d="M41.0 104.30H79.5" stroke="#111" stroke-width="1.0" stroke-dasharray="3.2 0.6 2.8 1.0 2.8 0.8 3.0 0.7 5.0 1.0 3.0 0.6 4.4 0.6 1.6 1.0 3.3 0.9 3.2 0.9" opacity="0.38"/><path d="M11.3 107.75H81.3" stroke="#111" stroke-width="1.1" stroke-dasharray="3.4 0.6 1.7 0.8 4.1 1.0 1.9 0.8 3.0 0.8 2.2 0.6 3.6 1.0 2.0 0.7 4.7 1.0 2.4 0.6 5.3 1.0 3.5 0.5 5.2 0.7 5.1 0.8 4.8 0.6 4.7 0.6 3.2 0.9" opacity="0.45"/><path d="M10.6 114.70H22.4" stroke="#111" stroke-width="0.8" stroke-dasharray="4.8 0.6 2.5 0.7 3.6 0.7" opacity="0.28"/><rect x="22.4" y="115.2" width="12.6" height="0.6" fill="#111" opacity="0.18"/></g></g></svg>
<span class="t " style="left:837.6px;top:1060px;font-size:33.2px;line-height:33.2px;color:#2f3740;transform:scaleX(0.9131);font-weight:700;opacity:.93;">SUPPLIER AGREEMENT AND CERTIFICATION</span>
<span class="t " style="left:836.8px;top:1107px;font-size:24.9px;line-height:24.9px;color:#5e6c7b;transform:scaleX(0.9960);">Feb 19, 2021 at 11:05am</span>
<span class="t " style="left:837.7px;top:1163px;font-size:24.9px;line-height:24.9px;color:#5a6878;transform:scaleX(0.9305);font-weight:700;opacity:.93;">Signers: 3</span>
<div class="btn" style="left:1662px;top:1056px;width:200px"></div>
<span class="t " style="left:1687.5px;top:1075px;font-size:25.9px;line-height:25.9px;color:#2f3740;transform:scaleX(0.9384);font-weight:700;opacity:.93;">Invite to Sign</span>
<div class="btn" style="left:1882px;top:1056px;width:256px"></div>
<span class="t " style="left:1954.1px;top:1075px;font-size:25.9px;line-height:25.9px;color:#2f3740;transform:scaleX(0.9385);font-weight:700;opacity:.93;">Invite via Link</span>
<svg style="left:1907px;top:1071px" width="34" height="32" viewBox="0 0 34 32" fill="none" stroke="#2f3740" stroke-width="3.900" stroke-linecap="round"><g transform="translate(17 16) rotate(-35)"><path d="M-4.500 4.750H-10.800A4 4 0 0 1 -14.800 0.750V-0.750A4 4 0 0 1 -10.800 -4.750H-2A4 4 0 0 1 2 -0.750V0.300"/><path d="M4.500 -4.750H10.800A4 4 0 0 1 14.800 -0.750V0.750A4 4 0 0 1 10.800 4.750H2A4 4 0 0 1 -2 0.750V-0.300"/></g></svg>
<div class="btn" style="left:2158.2px;top:1056px;width:155.4000000000001px"></div>
<span class="t " style="left:2230.4px;top:1075px;font-size:25.9px;line-height:25.9px;color:#2f3740;transform:scaleX(1.0017);font-weight:700;opacity:.93;">More</span>
<svg style="left:2183.8px;top:1084px" width="34" height="8" viewBox="0 0 34 8" fill="#2f3740"><circle cx="4" cy="4" r="3.800"/><circle cx="16.600" cy="4" r="3.800"/><circle cx="29.200" cy="4" r="3.800"/></svg>
<div class="hr" style="left:638px;top:1232px;width:1712px"></div>
<div class="cb" style="left:658px;top:1314px"></div>
<svg style="left:709px;top:1265px" width="98" height="130" viewBox="0 0 98 130" fill="none"><g transform="translate(1.50 1.30)"><rect x="0.5" y="0.5" width="94" height="125.400" rx="4.500" fill="#fff" stroke="#e6e7ea" stroke-width="1.200"/><g transform="translate(0.9 0.7)"><path d="M32.5 14.10H60.0" stroke="#111" stroke-width="1.0" stroke-dasharray="2.9 0.6 4.1 0.5 3.7 0.7 1.8 0.8 1.7 0.7 1.9 0.5 3.3 0.9 2.1 0.6 4.0 1.0" opacity="0.75"/><path d="M38.3 16.80H54.3" stroke="#111" stroke-width="1.2" stroke-dasharray="3.9 0.7 5.4 0.5 4.9 0.6" opacity="0.80"/><path d="M38.0 19.40H54.3" stroke="#111" stroke-width="1.0" stroke-dasharray="2.2 0.6 2.8 0.9 2.3 0.8 4.1 0.7 3.7 0.5" opacity="0.30"/><path d="M11.3 23.85H81.3" stroke="#111" stroke-width="1.1" stroke-dasharray="1.8 0.6 4.3 0.7 2.8 0.8 3.4 0.6 4.7 0.8 2.6 0.8 3.6 0.9 4.4 0.6 5.4 0.6 3.2 0.9 2.2 0.7 1.8 0.8 4.6 0.8 5.0 0.7 4.3 0.8 3.9 0.7 4.9 1.0" opacity="0.60"/><path d="M22.6 28.05H70.4" stroke="#111" stroke-width="1.1" stroke-dasharray="3.4 0.8 1.8 0.9 4.1 1.0 4.8 0.6 3.1 0.8 1.7 0.7 2.3 0.6 1.8 0.9 2.1 0.6 3.1 0.9 1.9 0.7 3.7 0.9 4.8 0.9" opacity="0.60"/><path d="M37.6 34.80H55.0" stroke="#111" stroke-width="1.0" stroke-dasharray="2.7 0.7 3.0 0.9 5.3 0.6 2.3 0.6 2.5 0.7" opacity="0.55"/><path d="M16.5 38.00H81.3" stroke="#111" stroke-width="1.0" stroke-dasharray="3.9 0.6 1.6 0.7 3.0 0.8 5.3 0.8 3.6 0.8 4.2 0.5 5.1 0.9 5.0 0.9 3.1 0.7 2.0 0.8 1.8 0.5 2.4 0.6 2.9 0.5 1.6 0.6 2.0 0.7 1.7 0.9 4.0 0.6" opacity="0.36"/><path d="M11.3 39.95H81.3" stroke="#111" stroke-width="1.0" stroke-dasharray="2.6 0.7 3.0 0.6 4.9 1.0 3.4 0.7 1.9 0.6 2.9 0.6 4.8 0.6 1.7 1.0 3.7 0.6 3.7 0.5 3.7 1.0 5.0 0.8 2.6 0.7 2.3 0.9 3.7 0.9 2.9 0.6 4.8 1.0" opacity="0.50"/><path d="M11.3 41.90H81.3" stroke="#111" stroke-width="1.0" stroke-dasharray="4.9 0.9 4.8 0.9 2.5 0.8 3.0 0.5 1.7 0.6 2.6 0.8 5.3 0.7 5.3 1.0 5.3 0.7 2.5 0.6 2.4 0.6 4.0 1.0 4.9 0.7 4.1 0.9 1.9 0.8 5.1 0.9" opacity="0.36"/><path d="M11.3 43.85H81.3" stroke="#111" stroke-width="1.0" stroke-dasharray="4.5 0.7 2.3 0.9 2.9 0.9 5.4 0.7 3.2 1.0 4.4 0.6 2.1 0.6 5.1 0.9 2.2 0.9 5.4 0.8 3.0 0.8 2.1 0.5 5.4 0.8 3.7 1.0 3.3 0.9 4.8 0.6" opacity="0.50"/><path d="M11.3 45.80H81.3" stroke="#111" stroke-width="1.0" stroke-dasharray="2.6 0.6 2.5 0.8 2.6 0.7 2.1 1.0 3.0 0.7 3.9 1.0 3.2 1.0 3.6 0.8 3.6 0.5 3.3 0.6 1.6 0.9 2.3 0.7 4.4 0.8 2.9 0.8 3.8 0.9 2.0 0.8 2.6 0.6 4.6 0.8 3.8 0.9" opacity="0.36"/><path d="M11.3 47.75H81.3" stroke="#111" stroke-width="1.0" stroke-dasharray="5.2 0.7 4.0 0.8 3.6 0.8 3.4 0.8 3.5 1.0 4.3 0.9 5.3 0.6 3.8 1.0 4.9 0.6 2.1 0.7 1.9 0.6 1.9 0.8 4.7 0.9 2.2 0.9 4.2 0.6 5.0 1.0" opacity="0.50"/><path d="M11.3 49.70H81.3" stroke="#111" stroke-width="1.0" stroke-dasharray="2.5 1.0 3.2 0.7 5.5 0.9 2.2 0.7 3.6 0.7 2.4 0.7 4.4 0.5 3.8 0.7 1.7 0.7 4.0 0.8 1.9 1.0 4.7 1.0 2.0 0.6 1.8 0.9 2.7 0.6 3.2 1.0 4.8 0.6 2.2 1.0" opacity="0.36"/><path d="M11.3 51.65H20.0" stroke="#111" stroke-width="1.0" stroke-dasharray="3.8 0.9 1.9 0.5 4.3 0.7" opacity="0.50"/><path d="M36.4 55.70H55.6" stroke="#111" stroke-width="1.0" stroke-dasharray="1.9 1.0 4.1 0.9 1.9 0.9 1.9 0.9 3.4 0.7 3.8 1.0" opacity="0.55"/><path d="M11.3 60.10H81.3" stroke="#111" stroke-width="1.0" stroke-dasharray="2.6 0.6 3.7 0.6 2.0 0.6 1.8 0.6 2.8 0.7 4.6 0.6 3.6 0.6 3.0 0.5 2.6 0.5 4.5 0.8 2.3 0.7 5.2 0.6 4.8 0.7 3.5 0.9 3.1 0.8 4.3 1.0 2.9 0.9 4.4 0.8" opacity="0.50"/><path d="M11.3 62.05H81.3" stroke="#111" stroke-width="1.0" stroke-dasharray="3.2 0.7 1.8 0.6 1.9 0.9 2.6 0.6 1.9 0.9 5.0 0.8 2.7 0.6 2.7 0.7 2.2 0.7 2.6 1.0 5.4 0.8 2.6 1.0 2.8 0.7 1.6 0.7 3.5 0.8 2.4 0.8 1.6 0.6 2.0 0.7 1.8 0.5 2.8 0.6 3.9 0.8" opacity="0.34"/><path d="M11.3 64.00H81.3" stroke="#111" stroke-width="1.0" stroke-dasharray="4.5 0.8 4.4 0.9 3.1 0.7 5.4 0.6 4.4 0.8 1.8 0.9 5.1 0.8 4.5 0.9 2.1 0.8 3.6 0.9 4.7 0.9 3.9 0.9 4.3 0.8 2.5 0.5 2.1 0.7 2.0 0.9" opacity="0.50"/><path d="M11.3 65.95H81.3" stroke="#111" stroke-width="1.0" stroke-dasharray="3.8 0.8 4.0 0.8 3.5 0.5 4.7 0.9 3.6 0.8 4.2 0.5 4.5 0.6 1.9 0.6 4.4 0.6 4.5 1.0 3.5 0.7 3.5 0.8 4.6 0.8 4.1 0.5 2.2 0.6 4.5 0.7" opacity="0.34"/><path d="M11.3 67.90H81.3" stroke="#111" stroke-width="1.0" stroke-dasharray="3.8 0.5 1.8 0.6 4.2 0.8 4.2 0.6 3.6 0.7 3.4 0.6 5.1 0.6 5.4 1.0 1.7 0.7 4.8 1.0 3.4 0.6 2.4 1.0 2.4 0.8 2.2 0.8 5.3 0.6 4.8 0.8" opacity="0.50"/><path d="M11.3 69.85H21.0" stroke="#111" stroke-width="1.0" stroke-dasharray="5.1 0.9 2.5 0.9 3.5 0.5" opacity="0.34"/><path d="M11.3 72.90H81.3" stroke="#111" stroke-width="1.0" stroke-dasharray="1.6 0.7 3.4 0.7 2.1 0.7 2.8 0.9 1.6 0.9 4.9 0.6 5.2 0.9 5.1 0.6 3.1 0.7 5.5 0.8 3.0 0.7 2.7 0.5 2.0 0.9 2.7 1.0 2.6 0.6 3.6 0.6 3.1 1.0 5.0 0.9" opacity="0.36"/><path d="M11.3 74.85H81.3" stroke="#111" stroke-width="1.0" stroke-dasharray="4.1 1.0 5.3 0.8 4.4 0.5 4.5 0.7 4.5 0.8 2.7 0.5 5.2 0.6 3.4 0.7 2.8 0.9 5.4 0.6 4.2 0.7 3.8 0.7 2.3 0.6 2.4 1.0 3.5 0.6 5.1 1.0" opacity="0.50"/><path d="M11.3 76.80H81.3" stroke="#111" stroke-width="1.0" stroke-dasharray="3.4 0.6 2.4 0.5 2.9 0.5 2.5 0.6 3.8 0.9 4.5 0.7 3.2 0.8 3.1 0.7 1.8 0.6 5.4 0.6 3.6 0.8 5.0 0.6 2.7 0.6 3.2 0.7 5.3 0.9 5.0 0.5 1.7 0.9" opacity="0.36"/><path d="M11.3 78.75H81.3" stroke="#111" stroke-width="1.0" stroke-dasharray="5.1 0.7 3.9 0.5 3.1 1.0 4.8 0.9 5.4 0.6 2.0 0.6 3.6 0.8 5.3 0.9 4.1 0.9 3.4 0.8 1.8 0.9 2.5 1.0 4.1 0.7 2.1 0.6 4.1 0.8 2.0 0.5 3.6 0.8" opacity="0.50"/><path d="M11.3 80.70H81.3" stroke="#111" stroke-width="1.0" stroke-dasharray="3.1 0.6 3.9 0.5 2.8 0.7 5.3 0.8 5.0 0.7 2.5 0.6 5.3 0.9 2.8 0.5 3.5 0.8 3.2 0.6 4.2 1.0 2.5 0.5 2.9 0.7 4.3 0.6 4.7 0.9 3.6 0.6" opacity="0.36"/><path d="M11.3 82.65H81.3" stroke="#111" stroke-width="1.0" stroke-dasharray="5.4 0.7 4.8 0.6 2.5 0.9 2.8 1.0 3.5 0.6 2.5 0.7 4.2 1.0 2.2 0.7 2.4 1.0 2.2 0.5 1.8 0.7 5.1 0.9 4.5 1.0 5.2 0.7 2.3 1.0 4.5 0.5 4.2 0.7" opacity="0.50"/><path d="M11.3 84.60H81.3" stroke="#111" stroke-width="1.0" stroke-dasharray="3.1 0.7 2.3 0.5 2.7 0.7 5.3 0.6 5.4 0.6 3.0 0.9 4.8 0.7 1.8 0.7 3.1 1.0 2.4 0.7 5.1 0.5 3.2 0.9 4.6 0.5 1.7 0.5 5.2 0.6 4.5 0.9 2.9 0.6" opacity="0.36"/><path d="M11.3 86.55H81.3" stroke="#111" stroke-width="1.0" stroke-dasharray="5.3 0.8 2.6 0.9 2.8 0.6 1.6 0.9 5.2 0.8 5.3 0.5 2.5 0.7 5.3 1.0 3.1 0.6 3.3 0.7 5.2 0.6 4.7 0.9 4.8 0.9 4.0 0.7 2.8 0.7 4.7 0.5" opacity="0.50"/><path d="M11.3 88.50H70.0" stroke="#111" stroke-width="1.0" stroke-dasharray="2.4 0.9 2.6 0.5 1.7 0.8 2.9 1.0 5.0 1.0 2.6 0.5 2.0 0.7 4.4 0.7 2.5 0.7 4.0 0.8 4.5 0.9 4.2 0.6 4.9 0.6 3.8 0.7 4.5 0.6" opacity="0.36"/><path d="M11.3 94.80H39.0" stroke="#111" stroke-width="1.2" stroke-dasharray="2.6 0.6 2.2 0.9 3.9 0.7 3.1 1.0 3.6 0.6 4.8 0.8 5.5 0.6" opacity="0.60"/><path d="M39.6 94.70H81.3" stroke="#111" stroke-width="1.0" stroke-dasharray="3.5 0.9 4.9 1.0 1.8 0.6 2.1 0.6 5.4 0.8 5.2 0.7 5.0 0.7 2.6 0.9 5.3 0.6" opacity="0.28"/><path d="M11.3 96.20H39.0" stroke="#111" stroke-width="0.8" stroke-dasharray="3.9 0.8 2.4 0.7 2.2 0.6 2.6 0.8 4.1 0.6 1.6 0.7 4.2 0.6 2.8 0.6" opacity="0.30"/><path d="M37.6 99.35H55.6" stroke="#111" stroke-width="1.1" stroke-dasharray="4.7 0.8 1.8 0.6 3.1 0.8 4.1 0.5 2.2 0.8" opacity="0.70"/><rect x="11.3" y="103.3" width="28.2" height="2.0" fill="#111" opacity="0.90"/><path d="M41.0 104.30H79.5" stroke="#111" stroke-width="1.0" stroke-dasharray="3.2 0.6 2.8 1.0 2.8 0.8 3.0 0.7 5.0 1.0 3.0 0.6 4.4 0.6 1.6 1.0 3.3 0.9 3.2 0.9" opacity="0.38"/><path d="M11.3 107.75H81.3" stroke="#111" stroke-width="1.1" stroke-dasharray="3.4 0.6 1.7 0.8 4.1 1.0 1.9 0.8 3.0 0.8 2.2 0.6 3.6 1.0 2.0 0.7 4.7 1.0 2.4 0.6 5.3 1.0 3.5 0.5 5.2 0.7 5.1 0.8 4.8 0.6 4.7 0.6 3.2 0.9" opacity="0.45"/><path d="M10.6 114.70H22.4" stroke="#111" stroke-width="0.8" stroke-dasharray="4.8 0.6 2.5 0.7 3.6 0.7" opacity="0.28"/><rect x="22.4" y="115.2" width="12.6" height="0.6" fill="#111" opacity="0.18"/></g></g></svg>
<span class="t " style="left:837.6px;top:1270px;font-size:33.2px;line-height:33.2px;color:#2f3740;transform:scaleX(0.9131);font-weight:700;opacity:.93;">SUPPLIER AGREEMENT AND CERTIFICATION</span>
<span class="t " style="left:836.8px;top:1317px;font-size:24.9px;line-height:24.9px;color:#5e6c7b;transform:scaleX(0.9912);">Feb 18, 2021 at 7:00pm</span>
<div class="abs" style="left:838px;top:1362px;width:250px;height:48px;border-radius:8px;background:#e9ebf5"></div>
<div class="abs" style="left:862px;top:1378px;width:16px;height:16px;border-radius:50%;background:#4a5b9e"></div>
<span class="t " style="left:894.6px;top:1373px;font-size:24.9px;line-height:24.9px;color:#5a6878;transform:scaleX(0.9924);font-weight:700;opacity:.93;">Waiting for Me</span>
<div class="btn" style="left:1674.4px;top:1266px;width:233.0px"></div>
<span class="t " style="left:1697.5px;top:1285px;font-size:25.9px;line-height:25.9px;color:#2f3740;transform:scaleX(0.9257);font-weight:700;opacity:.93;">Fill Out and Sign</span>
<div class="btn" style="left:1928.5px;top:1266px;width:209.0px"></div>
<span class="t " style="left:1954.1px;top:1285px;font-size:25.9px;line-height:25.9px;color:#2f3740;transform:scaleX(0.9279);font-weight:700;opacity:.93;">Cancel Invites</span>
<div class="btn" style="left:2158.2px;top:1266px;width:155.4000000000001px"></div>
<span class="t " style="left:2230.4px;top:1285px;font-size:25.9px;line-height:25.9px;color:#2f3740;transform:scaleX(1.0017);font-weight:700;opacity:.93;">More</span>
<svg style="left:2183.8px;top:1294px" width="34" height="8" viewBox="0 0 34 8" fill="#2f3740"><circle cx="4" cy="4" r="3.800"/><circle cx="16.600" cy="4" r="3.800"/><circle cx="29.200" cy="4" r="3.800"/></svg>
<span class="t " style="left:837.7px;top:1437px;font-size:24.9px;line-height:24.9px;color:#5a6878;transform:scaleX(0.9353);font-weight:700;opacity:.93;">Signers (3):</span>
<span class="t " style="left:989.4px;top:1437px;font-size:24.9px;line-height:24.9px;color:#5a6878;transform:scaleX(1.0600);">1</span>
<svg style="left:1012px;top:1438px" width="24" height="24" viewBox="0 0 24 24"><circle cx="12" cy="12" r="12" fill="#5aa56f"/><path d="M5.600 12.600l4.600 4.500 8.600-9.200" fill="none" stroke="#fff" stroke-width="3.400" stroke-linecap="round" stroke-linejoin="round"/></svg>
<span class="t " style="left:1042.5px;top:1437px;font-size:24.9px;line-height:24.9px;color:#5a6878;transform:scaleX(0.9709);font-weight:700;opacity:.93;">moorejessica4478@gmail.com</span>
<span class="t " style="left:1419.9px;top:1437px;font-size:24.9px;line-height:24.9px;color:#5a6878;transform:scaleX(1.0600);">2</span>
<svg style="left:1442px;top:1438px" width="24" height="24" viewBox="0 0 24 24"><circle cx="12" cy="12" r="12" fill="#8592a0"/><path d="M4.800 12h13M12.400 5.800l6.200 6.200-6.200 6.200" fill="none" stroke="#fff" stroke-width="3.200" stroke-linecap="round" stroke-linejoin="round"/></svg>
<span class="t " style="left:1475.1px;top:1437px;font-size:24.9px;line-height:24.9px;color:#5a6878;transform:scaleX(1.0561);">amanda.galloway@email.com</span>
<span class="t " style="left:1867.9px;top:1437px;font-size:24.9px;line-height:24.9px;color:#5a6878;transform:scaleX(1.0600);">3</span>
<svg style="left:1890.4px;top:1438px" width="24" height="24" viewBox="0 0 24 24"><circle cx="12" cy="12" r="12" fill="#8592a0"/><path d="M4.800 12h13M12.400 5.800l6.200 6.200-6.200 6.200" fill="none" stroke="#fff" stroke-width="3.200" stroke-linecap="round" stroke-linejoin="round"/></svg>
<span class="t " style="left:1921.9px;top:1437px;font-size:24.9px;line-height:24.9px;color:#5a6878;transform:scaleX(1.0597);">heather.arroyo@email.com</span>
<div class="hr" style="left:638px;top:1506px;width:1712px"></div>
</main>
<aside>
<svg style="left:2442px;top:180px" width="44" height="40" viewBox="0 0 44 40" fill="none" stroke="#2c76c9" stroke-width="4" stroke-linecap="round" stroke-linejoin="round"><path d="M25.600 36H5.400a1.400 1.400 0 0 1-1.400-1.400V5.400a1.400 1.400 0 0 1 1.400-1.400h12.800l4.200 5.800h16.200a1.400 1.400 0 0 1 1.400 1.400v11.600"/><path d="M34 23.400v13.200M27.400 30h13.200"/></svg>
<span class="t " style="left:2502.8px;top:186px;font-size:29.1px;line-height:29.1px;color:#2c76c9;transform:scaleX(1.0069);">New Folder</span>
<svg style="left:2440px;top:258px" width="48" height="48" viewBox="0 0 48 48" fill="none" stroke="#2c76c9" stroke-width="4" stroke-linecap="round" stroke-linejoin="round"><rect x="4" y="4" width="36" height="8" rx="0.500" stroke-linecap="butt"/><path d="M8.200 12v23.800h12.200M36 12v8.600"/><path d="M16.200 20h12"/><circle cx="35" cy="35" r="9" stroke-width="3.600"/><path d="M35 30v5.600h4.200" stroke-width="3"/></svg>
<span class="t " style="left:2503.0px;top:266px;font-size:29.1px;line-height:29.1px;color:#2c76c9;transform:scaleX(1.0115);">Bulk Archive</span>
<div class="hr" style="left:2424px;top:352px;width:430px;background:#dfe4e9"></div>
<span class="t " style="left:2423.0px;top:389px;font-size:24.9px;line-height:24.9px;color:#2f3740;transform:scaleX(0.9935);font-weight:700;">Multiple actions</span>
<span class="t " style="left:2423.0px;top:429px;font-size:24.9px;line-height:24.9px;color:#5a6878;transform:scaleX(1.0011);">Select several documents to use</span>
<span class="t " style="left:2422.9px;top:461px;font-size:24.9px;line-height:24.9px;color:#5a6878;transform:scaleX(1.0500);">multiple actions</span>
<svg style="left:2442px;top:526px" width="44" height="40" viewBox="0 0 44 40" fill="none" stroke="#5d9bd8" stroke-width="3.800" stroke-linecap="round" stroke-linejoin="round"><path d="M3.600 21V3.900h15l3.600 5.600h18v26.400H19.400"/><path d="M3 29.600h14.400M11.400 23.600l6 6-6 6"/></svg>
<span class="t " style="left:2502.5px;top:532px;font-size:29.1px;line-height:29.1px;color:#5d9bd8;transform:scaleX(1.0358);">Move</span>
<svg style="left:2438px;top:600px" width="52" height="52" viewBox="0 0 52 52" fill="none" stroke="#5d9bd8" stroke-width="3.800" stroke-linecap="round" stroke-linejoin="round"><path d="M26 2.600v34M14.600 25.400L26 36.800l11.400-11.400"/><path d="M4 32.600v9a6 6 0 0 0 6 6h32a6 6 0 0 0 6-6v-9" stroke-linecap="butt"/></svg>
<span class="t " style="left:2502.5px;top:611px;font-size:29.1px;line-height:29.1px;color:#5d9bd8;transform:scaleX(1.0468);">Download</span>
<svg style="left:2442px;top:684px" width="44" height="44" viewBox="0 0 44 44" fill="none" stroke="#5d9bd8" stroke-width="3.800" stroke-linecap="round" stroke-linejoin="round"><path d="M3.800 10h36.400"/><path d="M14.800 9.400V5a1 1 0 0 1 1-1h12.400a1 1 0 0 1 1 1v4.400"/><path d="M7.200 10.600l1.200 13M37.800 10.600l-2.400 29.200H19.400"/><path d="M15.600 17v5M22 17v11M28 17v16" stroke-width="3.400"/><path d="M6.600 34.200h12M13 28.400l5.800 5.800-5.800 5.800"/></svg>
<span class="t " style="left:2502.5px;top:691px;font-size:29.1px;line-height:29.1px;color:#5d9bd8;transform:scaleX(1.0196);">Delete Documents</span>
<svg style="left:2442px;top:762px" width="44" height="46" viewBox="0 0 44 46" fill="none" stroke="#5d9bd8" stroke-width="3.800" stroke-linecap="round" stroke-linejoin="round"><path d="M37.900 25.400A16.200 16.200 0 1 1 26.600 10.400"/><path d="M20 3.800l9.400 5.800-9 6.600"/></svg>
<span class="t " style="left:2502.6px;top:772px;font-size:29.1px;line-height:29.1px;color:#5d9bd8;transform:scaleX(0.9915);">Resend Invites</span>
<svg style="left:2442px;top:846px" width="44" height="40" viewBox="0 0 44 40" fill="none" stroke="#5d9bd8" stroke-width="3.800" stroke-linecap="round" stroke-linejoin="round"><path d="M4 21.400V12.800h36v23.400H19.400"/><path d="M11.400 12V4h21.200v8"/><path d="M10 23.600v13M3.600 30.100h13"/></svg>
<span class="t " style="left:2503.6px;top:852px;font-size:29.1px;line-height:29.1px;color:#5d9bd8;transform:scaleX(1.0115);">Create Document Group</span>
<div class="abs" style="left:2742px;top:1440px;width:96px;height:96px;border-radius:50%;background:#fff;box-shadow:0 6px 24px rgba(30,35,40,.16),0 0 3px rgba(30,35,40,.06)"></div>
<svg style="left:2766px;top:1466px" width="48" height="44" viewBox="0 0 48 44" fill="none" stroke="#2c76c9" stroke-width="3.800" stroke-linejoin="round" stroke-linecap="round"><path d="M36.500 16H39A3 3 0 0 1 42 19V35A3 3 0 0 1 39 38H19A3 3 0 0 1 16 35V30.500"/><path d="M6 34V9A3 3 0 0 1 9 6H31A3 3 0 0 1 34 9V25A3 3 0 0 1 31 28H12L6 34Z" fill="#fff"/><path d="M12 13H28M12 17H28M12 21H28" stroke-width="2" stroke-linecap="butt"/></svg>
</aside>
</body></html>
